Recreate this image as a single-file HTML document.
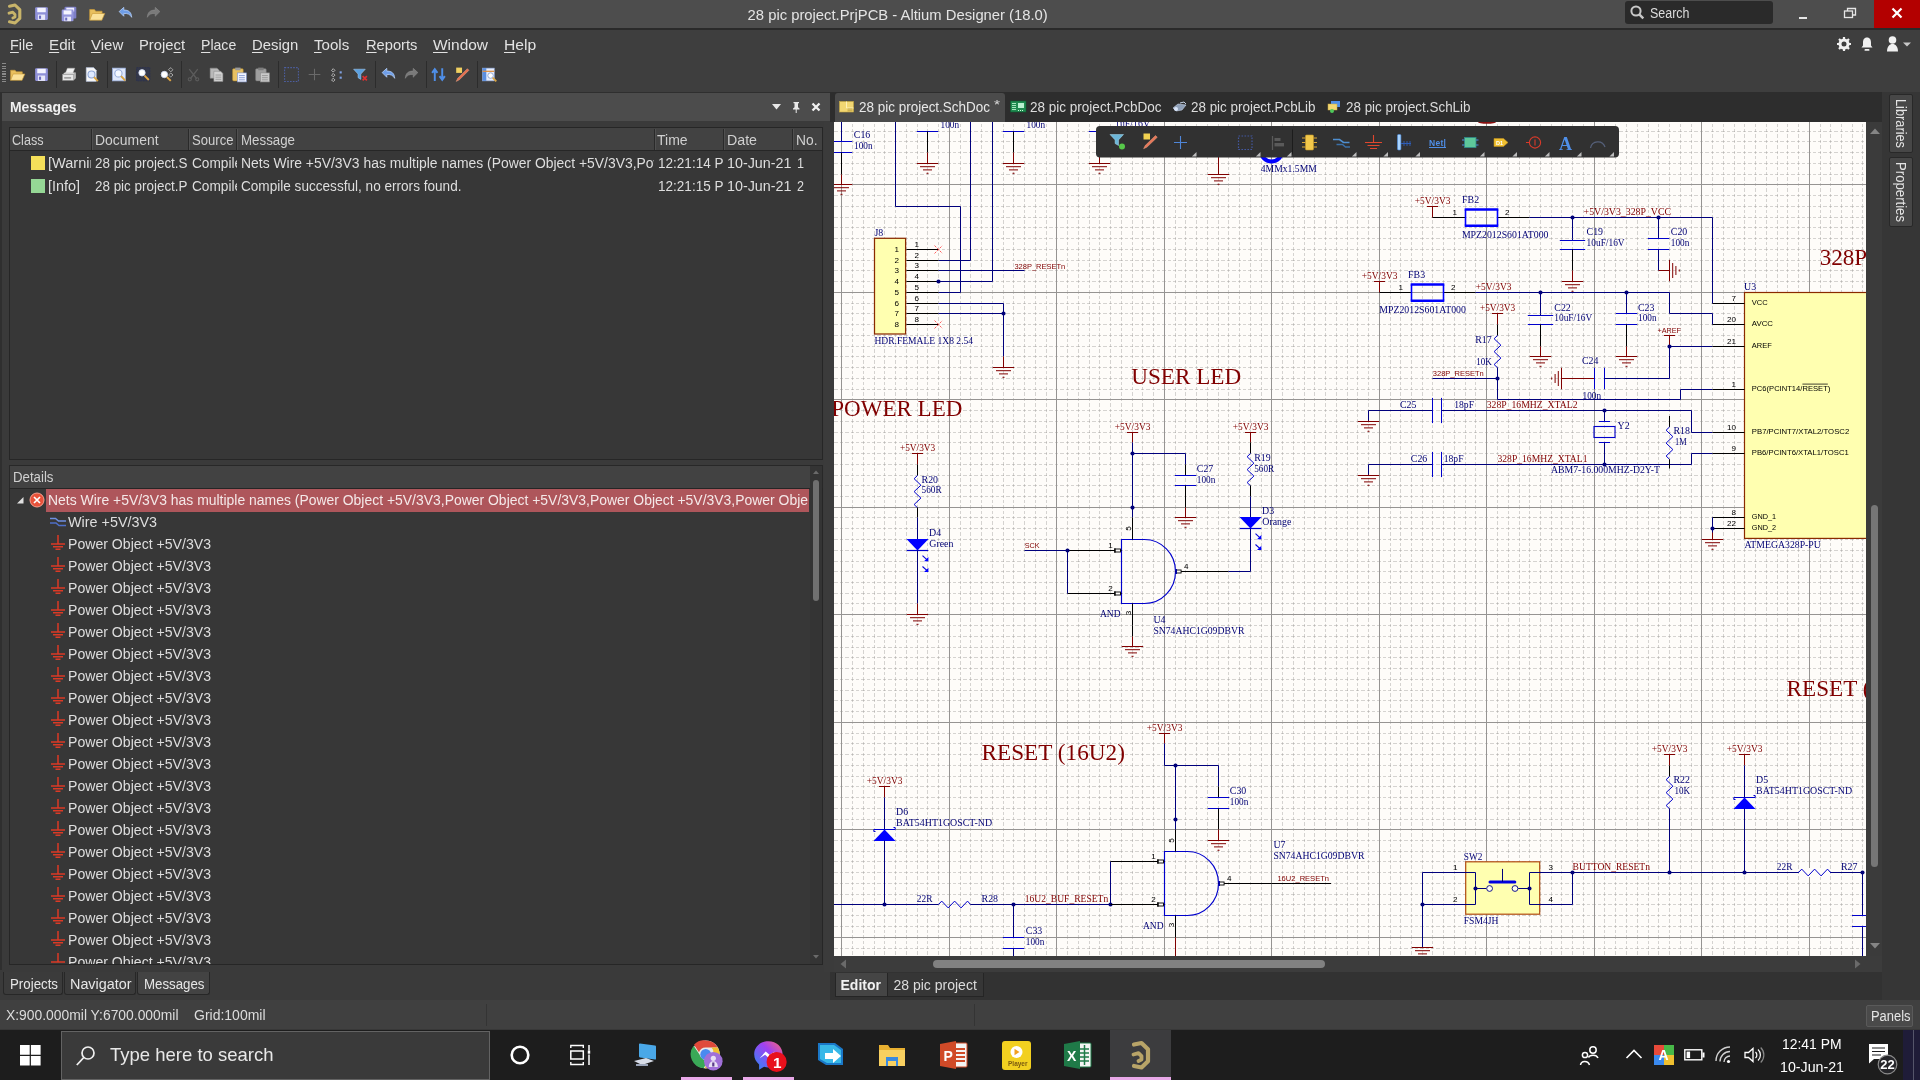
<!DOCTYPE html>
<html><head><meta charset="utf-8"><title>Altium Designer</title>
<style>
*{box-sizing:border-box;margin:0;padding:0}
html,body{width:1920px;height:1080px;overflow:hidden;background:#3e3e3e;font-family:"Liberation Sans",sans-serif;}
.a{position:absolute}
.t{position:absolute;white-space:nowrap;transform-origin:0 50%;line-height:1;color:#dcdcdc;font-size:14px}
.b{font-weight:bold}
svg{position:absolute;overflow:hidden}
svg text{white-space:pre}
.ts{font-family:"Liberation Serif",serif;font-size:9.9px;fill:#000074}
.tr{font-family:"Liberation Serif",serif;font-size:9.9px;fill:#800000}
.ta{font-family:"Liberation Sans",sans-serif;font-size:7.7px;fill:#800000}
.tp{font-family:"Liberation Sans",sans-serif;font-size:8.1px;fill:#000}
.tb{font-family:"Liberation Serif",serif;font-size:23px;fill:#800000}
u{text-decoration:underline;text-underline-offset:2px}
</style></head><body><div id="root" style="position:absolute;left:0;top:0;width:1920px;height:1080px;will-change:transform">
<div class="a" style="left:0px;top:0px;width:1920px;height:28px;background:#4d4d4d;"></div>
<div class="a" style="left:0px;top:28px;width:1920px;height:1.5px;background:#2a2a2a;"></div>
<div class="a" style="left:0px;top:29.5px;width:1920px;height:62.5px;background:#3e3e3e;"></div>
<svg style="left:3px;top:1px" width="22" height="26" viewBox="0 0 22 26"><path d="M6.500 5.200L12 4l4.800 4.600v8.800L12 22l-5.500-1.200" fill="none" stroke="#c8b46a" stroke-width="3.100" stroke-linejoin="round" stroke-linecap="round"/><path d="M6 12.200l3.800-1 2.200 2.200v2.600l-2.200 1" fill="none" stroke="#c8b46a" stroke-width="2.800" stroke-linejoin="round" stroke-linecap="round"/></svg>
<svg style="left:32.5px;top:5px" width="17" height="17" viewBox="0 0 16 16"><rect x="2" y="2" width="12" height="12" rx="1" fill="#8f90d8"/><rect x="4" y="2.6" width="8" height="4.2" fill="#f4f4ff"/><rect x="4.6" y="9" width="6.8" height="5" fill="#e8e8fa"/><rect x="5.6" y="10" width="2" height="3" fill="#6b6cc0"/></svg>
<svg style="left:60px;top:4.5px" width="18" height="18" viewBox="0 0 16 16"><rect x="4" y="1.5" width="10.5" height="10.5" rx="1" fill="#7d7ec6"/><rect x="5.6" y="2.4" width="7" height="3.4" fill="#eef"/><rect x="1.5" y="4" width="10.5" height="10.5" rx="1" fill="#9495dc"/><rect x="3.2" y="4.8" width="7" height="3.6" fill="#f4f4ff"/><rect x="3.8" y="10.4" width="6" height="4" fill="#e8e8fa"/><rect x="4.6" y="11.2" width="1.8" height="2.6" fill="#6b6cc0"/></svg>
<svg style="left:88px;top:5px" width="18" height="18" viewBox="0 0 16 16"><path d="M1.5 13.5V4h4.2l1.2 1.5h5.6v2" fill="#e9c05e" stroke="#c89a38" stroke-width=".6"/><path d="M1.5 13.5l2.4-6h11l-2.6 6z" fill="#fbe29a" stroke="#c89a38" stroke-width=".6"/></svg>
<svg style="left:116.5px;top:4.5px" width="17" height="17" viewBox="0 0 16 16"><path d="M2 6.2l4.4-4v2.6c4.4-.2 7.2 2 7.400 6.800-1.600-3-3.800-3.800-7.400-3.600v2.600z" fill="#6f9ee8" stroke="#b9d2fa" stroke-width=".7"/></svg>
<svg style="left:144.5px;top:4.5px" width="17" height="17" viewBox="0 0 16 16"><path d="M14 6.2l-4.4-4v2.600c-4.400-.200-7.200 2-7.400 6.800 1.600-3 3.800-3.800 7.400-3.600v2.600z" fill="#7a7a7a" stroke="#8d8d8d" stroke-width=".5"/></svg>
<span class="t" style="left:747.6px;top:8.05px;font-size:14.8px;color:#e4e4e4;">28 pic project.PrjPCB - Altium Designer (18.0)</span>
<div class="a" style="left:1625px;top:1px;width:148px;height:23px;background:#2a2a2a;border-radius:3px"></div>
<svg style="left:1629px;top:4px" width="16" height="16" viewBox="0 0 16 16"><circle cx="7" cy="7" r="4.600" fill="none" stroke="#c8c8c8" stroke-width="2"/><path d="M10.300 10.300l4 4" stroke="#c8c8c8" stroke-width="2.400"/></svg>
<span class="t" style="left:1650px;top:5.74px;color:#dcdcdc;transform:scaleX(0.8904);">Search</span>
<div class="a" style="left:1798.5px;top:17px;width:8px;height:2px;background:#e6e6e6;"></div>
<svg style="left:1843px;top:6px" width="14" height="14" viewBox="0 0 14 14"><rect x="1.500" y="5" width="8" height="6.500" fill="none" stroke="#e6e6e6" stroke-width="1.300"/><path d="M4.500 5v-2.500h8v6.500h-3" fill="none" stroke="#e6e6e6" stroke-width="1.300"/></svg>
<div class="a" style="left:1874px;top:0px;width:46px;height:28px;background:#b30000;"></div>
<svg style="left:1890px;top:6px" width="14" height="14" viewBox="0 0 14 14"><path d="M2.500 2.500l9 9M11.500 2.500l-9 9" stroke="#fff" stroke-width="2.200"/></svg>
<span class="t" style="left:10px;top:37.25px;font-size:15px;color:#e2e2e2;transform:scaleX(0.9598);"><u>F</u>ile</span>
<span class="t" style="left:49px;top:37.25px;font-size:15px;color:#e2e2e2;transform:scaleX(1.0136);"><u>E</u>dit</span>
<span class="t" style="left:91px;top:37.25px;font-size:15px;color:#e2e2e2;"><u>V</u>iew</span>
<span class="t" style="left:139px;top:37.25px;font-size:15px;color:#e2e2e2;transform:scaleX(0.9853);">Proje<u>c</u>t</span>
<span class="t" style="left:201px;top:37.25px;font-size:15px;color:#e2e2e2;transform:scaleX(0.9381);"><u>P</u>lace</span>
<span class="t" style="left:252px;top:37.25px;font-size:15px;color:#e2e2e2;transform:scaleX(0.9894);"><u>D</u>esign</span>
<span class="t" style="left:314px;top:37.25px;font-size:15px;color:#e2e2e2;transform:scaleX(1.0052);"><u>T</u>ools</span>
<span class="t" style="left:366px;top:37.25px;font-size:15px;color:#e2e2e2;transform:scaleX(0.9786);"><u>R</u>eports</span>
<span class="t" style="left:433px;top:37.25px;font-size:15px;color:#e2e2e2;transform:scaleX(1.0309);"><u>W</u>indow</span>
<span class="t" style="left:504px;top:37.25px;font-size:15px;color:#e2e2e2;transform:scaleX(1.0437);"><u>H</u>elp</span>
<svg style="left:1836px;top:36px" width="16" height="16" viewBox="0 0 16 16"><circle cx="8" cy="8" r="4" fill="none" stroke="#f0f0f0" stroke-width="3"/><path d="M8 1v14M1 8h14M3 3l10 10M13 3l-10 10" stroke="#f0f0f0" stroke-width="2.200" stroke-dasharray="2.200 9.600 2.200 0"/><circle cx="8" cy="8" r="1.900" fill="#3e3e3e"/></svg>
<svg style="left:1860px;top:36px" width="14" height="16" viewBox="0 0 14 16"><path d="M7 1.500c3 0 4 2.500 4 5v3l1.500 2h-11l1.500-2v-3c0-2.500 1-5 4-5z" fill="#f0f0f0"/><rect x="4.500" y="13" width="5" height="1.800" rx=".9" fill="#f0f0f0"/></svg>
<svg style="left:1884px;top:35px" width="28" height="18" viewBox="0 0 28 18"><circle cx="8.500" cy="5" r="3.800" fill="#f0f0f0"/><path d="M3 16.500c0-5 2.500-7.500 5.500-7.500s5.500 2.500 5.500 7.500z" fill="#f0f0f0"/><path d="M19 7.500h8l-4 4z" fill="#c8c8c8"/></svg>
<div class="a" style="left:2px;top:63px;width:4px;height:1.2px;background:#8a8a8a;"></div>
<div class="a" style="left:2px;top:65.6px;width:4px;height:1.2px;background:#8a8a8a;"></div>
<div class="a" style="left:2px;top:68.2px;width:4px;height:1.2px;background:#8a8a8a;"></div>
<div class="a" style="left:2px;top:70.8px;width:4px;height:1.2px;background:#8a8a8a;"></div>
<div class="a" style="left:2px;top:73.4px;width:4px;height:1.2px;background:#8a8a8a;"></div>
<div class="a" style="left:2px;top:76px;width:4px;height:1.2px;background:#8a8a8a;"></div>
<div class="a" style="left:2px;top:78.6px;width:4px;height:1.2px;background:#8a8a8a;"></div>
<div class="a" style="left:2px;top:81.2px;width:4px;height:1.2px;background:#8a8a8a;"></div>
<svg style="left:8.5px;top:66px" width="17" height="17" viewBox="0 0 16 16"><path d="M1.5 13.5V4h4.2l1.2 1.5h5.6v2" fill="#e9c05e" stroke="#c89a38" stroke-width=".6"/><path d="M1.5 13.5l2.4-6h11l-2.6 6z" fill="#fbe29a" stroke="#c89a38" stroke-width=".6"/></svg>
<svg style="left:32.5px;top:66px" width="17" height="17" viewBox="0 0 16 16"><rect x="2" y="2" width="12" height="12" rx="1" fill="#8f90d8"/><rect x="4" y="2.6" width="8" height="4.2" fill="#f4f4ff"/><rect x="4.6" y="9" width="6.8" height="5" fill="#e8e8fa"/><rect x="5.6" y="10" width="2" height="3" fill="#6b6cc0"/></svg>
<svg style="left:60.5px;top:66px" width="17" height="17" viewBox="0 0 16 16"><path d="M4 7l2-5h7l-2 5z" fill="#f2f2f2" stroke="#aaa" stroke-width=".4"/><path d="M1.500 8l2-2h10.500l-2 2z" fill="#d4d4d4"/><rect x="1.500" y="8" width="10.500" height="5.500" fill="#e6e6e6" stroke="#9a9a9a" stroke-width=".4"/><path d="M12 8l2-2v5.500l-2 2z" fill="#b8b8b8"/><rect x="3" y="10.600" width="6.500" height="1.200" fill="#888"/></svg>
<svg style="left:82.5px;top:66px" width="17" height="17" viewBox="0 0 16 16"><path d="M3 1.500h7l2.500 2.500v10.500h-9.500z" fill="#f7f7f7" stroke="#a8b8d8" stroke-width=".5"/><circle cx="8" cy="8" r="3.300" fill="#dfeaff" stroke="#8ea6d6" stroke-width="1"/><path d="M10.400 10.400l3.600 3.800" stroke="#d9a441" stroke-width="1.800"/></svg>
<svg style="left:110.5px;top:66px" width="17" height="17" viewBox="0 0 16 16"><rect x="1.500" y="2" width="12" height="12" fill="#dfe8fb" stroke="#9db2e0" stroke-width=".7"/><circle cx="7" cy="7" r="3.400" fill="#f4f8ff" stroke="#93a9d8" stroke-width="1"/><path d="M9.500 9.500l4 4.200" stroke="#d9a441" stroke-width="1.800"/></svg>
<svg style="left:134.5px;top:66px" width="17" height="17" viewBox="0 0 16 16"><rect x="1.500" y="1.500" width="12.500" height="12.500" fill="#34384a" stroke="#2a3050" stroke-width=".8" stroke-dasharray="1.500 1"/><circle cx="6.600" cy="6.400" r="3" fill="#fff" stroke="#cfd8ee" stroke-width=".8"/><path d="M9 9l4 4.200" stroke="#e0a646" stroke-width="1.800"/></svg>
<svg style="left:157.5px;top:66px" width="17" height="17" viewBox="0 0 16 16"><circle cx="6" cy="8" r="3" fill="#fff" stroke="#cfd8ee" stroke-width=".8"/><path d="M8.400 10.400l3.600 3.600" stroke="#e0a646" stroke-width="1.800"/><path d="M12 1.500l2 2-2 2-2-2z M12 6.500l2 2-2 2-2-2z" fill="none" stroke="#e8e8e8" stroke-width=".9" stroke-dasharray="1 .6"/></svg>
<svg style="left:184.5px;top:66px" width="17" height="17" viewBox="0 0 16 16"><path d="M4 3l7 9M12 3l-7 9" stroke="#5c5c5c" stroke-width="1.200"/><circle cx="4.500" cy="12.500" r="1.500" fill="none" stroke="#5c5c5c"/><circle cx="11.500" cy="12.500" r="1.500" fill="none" stroke="#5c5c5c"/></svg>
<svg style="left:207.5px;top:66px" width="17" height="17" viewBox="0 0 16 16"><path d="M2 2h6.500l2 2v7.500h-8.500z" fill="#b9b9b9" stroke="#8a8a8a" stroke-width=".5"/><path d="M5.500 5h6.500l2 2v7.500h-8.500z" fill="#d2d2d2" stroke="#8a8a8a" stroke-width=".5"/><path d="M7 8.500h5.500M7 10.500h5.500M7 12.500h5.500" stroke="#8c8c8c" stroke-width=".7"/></svg>
<svg style="left:230.5px;top:66px" width="17" height="17" viewBox="0 0 16 16"><rect x="1.500" y="2.500" width="10" height="11.500" rx="1" fill="#e8c163" stroke="#b88d2e" stroke-width=".5"/><rect x="4" y="1.500" width="5" height="2.500" fill="#9a9a9a"/><rect x="6" y="6.500" width="8.500" height="8.500" fill="#f2f5ff" stroke="#7f93c9" stroke-width=".6"/><path d="M7.500 9h5.500M7.500 11h5.500M7.500 13h5.500" stroke="#6f86c6" stroke-width=".7"/></svg>
<svg style="left:253.5px;top:66px" width="17" height="17" viewBox="0 0 16 16"><rect x="1.500" y="2.500" width="10" height="11.500" rx="1" fill="#9f9f9f" stroke="#777" stroke-width=".5"/><rect x="4" y="1.500" width="5" height="2.500" fill="#7d7d7d"/><rect x="6" y="6.500" width="8.500" height="8.500" fill="#c9c9c9" stroke="#8a8a8a" stroke-width=".6"/><path d="M7.500 9h5.500M7.500 11h5.500M7.500 13h5.500" stroke="#8a8a8a" stroke-width=".7"/></svg>
<svg style="left:282.5px;top:66px" width="17" height="17" viewBox="0 0 16 16"><rect x="1.500" y="1.500" width="13" height="13" fill="none" stroke="#4d5fa0" stroke-width="1" stroke-dasharray="1.500 1.200"/></svg>
<svg style="left:305.5px;top:66px" width="17" height="17" viewBox="0 0 16 16"><path d="M8 2.500v11M2.500 8h11" stroke="#6a6a6a" stroke-width="1"/></svg>
<svg style="left:328.5px;top:66px" width="17" height="17" viewBox="0 0 16 16"><path d="M4 2.500l1.600 1.600-1.600 1.600-1.600-1.600zM4 7l1.600 1.600-1.600 1.600-1.600-1.600zM4 11.500l1.600 1.600-1.600 1.600-1.600-1.600z" fill="none" stroke="#c8c8c8" stroke-width=".8"/><rect x="10" y="5" width="2" height="2" fill="#7fa0e0"/><rect x="10" y="10" width="2" height="2" fill="#7fa0e0"/></svg>
<svg style="left:351.5px;top:66px" width="17" height="17" viewBox="0 0 16 16"><path d="M1.500 3h11l-4.200 4.600v5l-2.600-1.600v-3.400z" fill="#5aa0e0" stroke="#a8d0f8" stroke-width=".5"/><path d="M10 9.500l4 4M14 9.500l-4 4" stroke="#e03030" stroke-width="1.600"/></svg>
<svg style="left:379.5px;top:66px" width="17" height="17" viewBox="0 0 16 16"><path d="M2 6.2l4.4-4v2.6c4.4-.2 7.2 2 7.400 6.800-1.600-3-3.800-3.800-7.400-3.600v2.600z" fill="#6f9ee8" stroke="#b9d2fa" stroke-width=".7"/></svg>
<svg style="left:402.5px;top:66px" width="17" height="17" viewBox="0 0 16 16"><path d="M14 6.2l-4.4-4v2.600c-4.400-.200-7.200 2-7.400 6.800 1.600-3 3.800-3.800 7.400-3.600v2.600z" fill="#7a7a7a" stroke="#8d8d8d" stroke-width=".5"/></svg>
<svg style="left:429.5px;top:66px" width="17" height="17" viewBox="0 0 16 16"><path d="M4.500 14V4M2 6.500l2.500-3.500 2.500 3.500" fill="none" stroke="#4f8fe8" stroke-width="1.800"/><path d="M11.500 2v10M9 9.500l2.500 3.500 2.500-3.500" fill="none" stroke="#4f8fe8" stroke-width="1.800"/></svg>
<svg style="left:452.5px;top:66px" width="17" height="17" viewBox="0 0 16 16"><rect x="3" y="1.500" width="5.500" height="5" fill="#f0d060"/><path d="M13.500 2.500l1.500 1.500-9 9-3 1.500 1.500-3z" fill="#e87050" stroke="#f4b090" stroke-width=".4"/></svg>
<svg style="left:480.5px;top:66px" width="17" height="17" viewBox="0 0 16 16"><rect x="1.500" y="2" width="11" height="12" fill="#e8eefc" stroke="#8ea6d6" stroke-width=".6"/><rect x="1.500" y="2" width="3.500" height="12" fill="#5b8fe0"/><path d="M1.500 5h11" stroke="#e09040" stroke-width="1.200"/><circle cx="9" cy="9" r="2.600" fill="#fff" stroke="#8ea6d6" stroke-width=".9"/><path d="M11 11l3.400 3.400" stroke="#d9a441" stroke-width="1.700"/></svg>
<div class="a" style="left:56px;top:61px;width:1px;height:27px;background:#2c2c2c;"></div>
<div class="a" style="left:107px;top:61px;width:1px;height:27px;background:#2c2c2c;"></div>
<div class="a" style="left:181px;top:61px;width:1px;height:27px;background:#2c2c2c;"></div>
<div class="a" style="left:278px;top:61px;width:1px;height:27px;background:#2c2c2c;"></div>
<div class="a" style="left:375px;top:61px;width:1px;height:27px;background:#2c2c2c;"></div>
<div class="a" style="left:426px;top:61px;width:1px;height:27px;background:#2c2c2c;"></div>
<div class="a" style="left:477px;top:61px;width:1px;height:27px;background:#2c2c2c;"></div>
<div class="a" style="left:0px;top:92px;width:834px;height:908px;background:#2f2f2f;"></div>
<div class="a" style="left:2px;top:93px;width:828px;height:28px;background:#4c4c4c;"></div>
<span class="t b" style="left:10px;top:99.45px;font-size:15px;color:#f0f0f0;transform:scaleX(0.9287);">Messages</span>
<svg style="left:770px;top:100px" width="56" height="14" viewBox="0 0 56 14"><path d="M2 4h9l-4.500 5.500z" fill="#e8e8e8"/><path d="M23.500 2h5.500v1.200h-1v4l1.500 1.300v1h-2.800v3.500h-1v-3.500h-2.700v-1l1.500-1.300v-4h-1z" fill="#e8e8e8"/><path d="M42.500 3.500l7 7M49.500 3.500l-7 7" stroke="#f0f0f0" stroke-width="2.300"/></svg>
<div class="a" style="left:2px;top:121px;width:828px;height:853px;background:#3a3a3a;"></div>
<div class="a" style="left:9px;top:127px;width:814px;height:332.5px;background:#373737;border:1px solid #262626"></div>
<div class="a" style="left:10px;top:128px;width:812px;height:23px;background:#424242;border-bottom:1px solid #262626"></div>
<div class="a" style="left:91px;top:129px;width:1px;height:21px;background:#2a2a2a;"></div>
<div class="a" style="left:92px;top:129px;width:1px;height:21px;background:#505050;"></div>
<div class="a" style="left:188px;top:129px;width:1px;height:21px;background:#2a2a2a;"></div>
<div class="a" style="left:189px;top:129px;width:1px;height:21px;background:#505050;"></div>
<div class="a" style="left:236px;top:129px;width:1px;height:21px;background:#2a2a2a;"></div>
<div class="a" style="left:237px;top:129px;width:1px;height:21px;background:#505050;"></div>
<div class="a" style="left:654px;top:129px;width:1px;height:21px;background:#2a2a2a;"></div>
<div class="a" style="left:655px;top:129px;width:1px;height:21px;background:#505050;"></div>
<div class="a" style="left:723px;top:129px;width:1px;height:21px;background:#2a2a2a;"></div>
<div class="a" style="left:724px;top:129px;width:1px;height:21px;background:#505050;"></div>
<div class="a" style="left:792px;top:129px;width:1px;height:21px;background:#2a2a2a;"></div>
<div class="a" style="left:793px;top:129px;width:1px;height:21px;background:#505050;"></div>
<span class="t" style="left:12px;top:133.14px;color:#d0d0d0;transform:scaleX(0.8998);">Class</span>
<span class="t" style="left:95px;top:133.14px;color:#d0d0d0;transform:scaleX(0.9952);">Document</span>
<span class="t" style="left:192px;top:133.14px;color:#d0d0d0;transform:scaleX(0.9355);">Source</span>
<span class="t" style="left:241px;top:133.14px;color:#d0d0d0;transform:scaleX(0.9506);">Message</span>
<span class="t" style="left:657px;top:133.14px;color:#d0d0d0;">Time</span>
<span class="t" style="left:727px;top:133.14px;color:#d0d0d0;transform:scaleX(1.0144);">Date</span>
<span class="t" style="left:796px;top:133.14px;color:#d0d0d0;transform:scaleX(0.9869);">No.</span>
<div class="a" style="left:31px;top:156.2px;width:13.5px;height:13.5px;background:#f5e05a;"></div>
<div class="a" style="left:48px;top:154.34px;width:42.5px;height:19px;overflow:hidden;"><span class="t" style="left:0;top:2px;color:#dedede;transform:scaleX(1.0393)">[Warning]</span></div>
<div class="a" style="left:95px;top:154.34px;width:92.5px;height:19px;overflow:hidden;"><span class="t" style="left:0;top:2px;color:#dedede;transform:scaleX(0.9586)">28 pic project.SchDoc</span></div>
<div class="a" style="left:192px;top:154.34px;width:44.8px;height:19px;overflow:hidden;"><span class="t" style="left:0;top:2px;color:#dedede;transform:scaleX(0.9755)">Compiler</span></div>
<div class="a" style="left:241px;top:154.34px;width:413px;height:19px;overflow:hidden;"><span class="t" style="left:0;top:2px;color:#dedede;transform:scaleX(0.9927)">Nets Wire +5V/3V3 has multiple names (Power Object +5V/3V3,Power Object +5V/3V3)</span></div>
<div class="a" style="left:658px;top:154.34px;width:65.5px;height:19px;overflow:hidden;"><span class="t" style="left:0;top:2px;color:#dedede;transform:scaleX(0.9671)">12:21:14 PM</span></div>
<span class="t" style="left:727px;top:156.34px;color:#dedede;transform:scaleX(1.0231);">10-Jun-21</span>
<span class="t" style="left:797px;top:156.34px;color:#dedede;transform:scaleX(0.8990);">1</span>
<div class="a" style="left:31px;top:179.2px;width:13.5px;height:13.5px;background:#95d795;"></div>
<div class="a" style="left:48px;top:177.34px;width:42.5px;height:19px;overflow:hidden;"><span class="t" style="left:0;top:2px;color:#dedede;transform:scaleX(1.0279)">[Info]</span></div>
<div class="a" style="left:95px;top:177.34px;width:92.5px;height:19px;overflow:hidden;"><span class="t" style="left:0;top:2px;color:#dedede;transform:scaleX(0.9586)">28 pic project.PrjPCB</span></div>
<div class="a" style="left:192px;top:177.34px;width:44.8px;height:19px;overflow:hidden;"><span class="t" style="left:0;top:2px;color:#dedede;transform:scaleX(0.9755)">Compiler</span></div>
<div class="a" style="left:241px;top:177.34px;width:413px;height:19px;overflow:hidden;"><span class="t" style="left:0;top:2px;color:#dedede;transform:scaleX(0.9704)">Compile successful, no errors found.</span></div>
<div class="a" style="left:658px;top:177.34px;width:65.5px;height:19px;overflow:hidden;"><span class="t" style="left:0;top:2px;color:#dedede;transform:scaleX(0.9671)">12:21:15 PM</span></div>
<span class="t" style="left:727px;top:179.34px;color:#dedede;transform:scaleX(1.0231);">10-Jun-21</span>
<span class="t" style="left:797px;top:179.34px;color:#dedede;transform:scaleX(0.8990);">2</span>
<div class="a" style="left:9px;top:464.5px;width:814px;height:24px;background:#424242;border:1px solid #282828"></div>
<span class="t" style="left:13px;top:470.34px;color:#d0d0d0;transform:scaleX(0.9464);">Details</span>
<div class="a" style="left:9px;top:488px;width:814px;height:477px;background:#373737;border:1px solid #262626"></div>
<div class="a" style="left:10px;top:489px;width:812px;height:475px;overflow:hidden">
<div class="a" style="left:36px;top:0px;width:763px;height:22.500px;background:#ae565b"></div>
<svg style="left:4px;top:5px" width="12" height="12"><path d="M9.500 3v6.500h-6.500z" fill="#e0e0e0"/></svg>
<svg style="left:19px;top:3px" width="16" height="16"><circle cx="8" cy="8" r="7" fill="#e8523a" stroke="#f6a090" stroke-width="1"/><path d="M5 5l6 6M11 5l-6 6" stroke="#fff" stroke-width="1.700"/></svg>
<span class="t" style="left:38px;top:4.34px;color:#f4e8e8;transform:scaleX(0.9956)">Nets Wire +5V/3V3 has multiple names (Power Object +5V/3V3,Power Object +5V/3V3,Power Object +5V/3V3,Power Obje</span>
<svg style="left:39px;top:26px" width="18" height="14"><path d="M1 3.500h5.500l3 2.500h7.500" fill="none" stroke="#6f8fe0" stroke-width="1.500"/><path d="M1 8h6l3 2.500h7" fill="none" stroke="#4f6fc8" stroke-width="1.500"/></svg>
<span class="t" style="left:58px;top:26.34px;color:#dedede;transform:scaleX(1.0258)">Wire +5V/3V3</span>
<svg style="left:40px;top:45.7px" width="16" height="16"><path d="M8 0v9M1 9h14M3 11.700h10M5.500 14.200h5" stroke="#dc3a26" stroke-width="1.500"/></svg>
<span class="t" style="left:58px;top:48.34px;color:#dedede;transform:scaleX(1.0069)">Power Object +5V/3V3</span>
<svg style="left:40px;top:67.7px" width="16" height="16"><path d="M8 0v9M1 9h14M3 11.700h10M5.500 14.200h5" stroke="#dc3a26" stroke-width="1.500"/></svg>
<span class="t" style="left:58px;top:70.34px;color:#dedede;transform:scaleX(1.0069)">Power Object +5V/3V3</span>
<svg style="left:40px;top:89.7px" width="16" height="16"><path d="M8 0v9M1 9h14M3 11.700h10M5.500 14.200h5" stroke="#dc3a26" stroke-width="1.500"/></svg>
<span class="t" style="left:58px;top:92.34px;color:#dedede;transform:scaleX(1.0069)">Power Object +5V/3V3</span>
<svg style="left:40px;top:111.7px" width="16" height="16"><path d="M8 0v9M1 9h14M3 11.700h10M5.500 14.200h5" stroke="#dc3a26" stroke-width="1.500"/></svg>
<span class="t" style="left:58px;top:114.34px;color:#dedede;transform:scaleX(1.0069)">Power Object +5V/3V3</span>
<svg style="left:40px;top:133.7px" width="16" height="16"><path d="M8 0v9M1 9h14M3 11.700h10M5.500 14.200h5" stroke="#dc3a26" stroke-width="1.500"/></svg>
<span class="t" style="left:58px;top:136.34px;color:#dedede;transform:scaleX(1.0069)">Power Object +5V/3V3</span>
<svg style="left:40px;top:155.7px" width="16" height="16"><path d="M8 0v9M1 9h14M3 11.700h10M5.500 14.200h5" stroke="#dc3a26" stroke-width="1.500"/></svg>
<span class="t" style="left:58px;top:158.34px;color:#dedede;transform:scaleX(1.0069)">Power Object +5V/3V3</span>
<svg style="left:40px;top:177.7px" width="16" height="16"><path d="M8 0v9M1 9h14M3 11.700h10M5.500 14.200h5" stroke="#dc3a26" stroke-width="1.500"/></svg>
<span class="t" style="left:58px;top:180.34px;color:#dedede;transform:scaleX(1.0069)">Power Object +5V/3V3</span>
<svg style="left:40px;top:199.7px" width="16" height="16"><path d="M8 0v9M1 9h14M3 11.700h10M5.500 14.200h5" stroke="#dc3a26" stroke-width="1.500"/></svg>
<span class="t" style="left:58px;top:202.34px;color:#dedede;transform:scaleX(1.0069)">Power Object +5V/3V3</span>
<svg style="left:40px;top:221.7px" width="16" height="16"><path d="M8 0v9M1 9h14M3 11.700h10M5.500 14.200h5" stroke="#dc3a26" stroke-width="1.500"/></svg>
<span class="t" style="left:58px;top:224.34px;color:#dedede;transform:scaleX(1.0069)">Power Object +5V/3V3</span>
<svg style="left:40px;top:243.7px" width="16" height="16"><path d="M8 0v9M1 9h14M3 11.700h10M5.500 14.200h5" stroke="#dc3a26" stroke-width="1.500"/></svg>
<span class="t" style="left:58px;top:246.34px;color:#dedede;transform:scaleX(1.0069)">Power Object +5V/3V3</span>
<svg style="left:40px;top:265.7px" width="16" height="16"><path d="M8 0v9M1 9h14M3 11.700h10M5.500 14.200h5" stroke="#dc3a26" stroke-width="1.500"/></svg>
<span class="t" style="left:58px;top:268.34px;color:#dedede;transform:scaleX(1.0069)">Power Object +5V/3V3</span>
<svg style="left:40px;top:287.7px" width="16" height="16"><path d="M8 0v9M1 9h14M3 11.700h10M5.500 14.200h5" stroke="#dc3a26" stroke-width="1.500"/></svg>
<span class="t" style="left:58px;top:290.34px;color:#dedede;transform:scaleX(1.0069)">Power Object +5V/3V3</span>
<svg style="left:40px;top:309.7px" width="16" height="16"><path d="M8 0v9M1 9h14M3 11.700h10M5.500 14.200h5" stroke="#dc3a26" stroke-width="1.500"/></svg>
<span class="t" style="left:58px;top:312.34px;color:#dedede;transform:scaleX(1.0069)">Power Object +5V/3V3</span>
<svg style="left:40px;top:331.7px" width="16" height="16"><path d="M8 0v9M1 9h14M3 11.700h10M5.500 14.200h5" stroke="#dc3a26" stroke-width="1.500"/></svg>
<span class="t" style="left:58px;top:334.34px;color:#dedede;transform:scaleX(1.0069)">Power Object +5V/3V3</span>
<svg style="left:40px;top:353.7px" width="16" height="16"><path d="M8 0v9M1 9h14M3 11.700h10M5.500 14.200h5" stroke="#dc3a26" stroke-width="1.500"/></svg>
<span class="t" style="left:58px;top:356.34px;color:#dedede;transform:scaleX(1.0069)">Power Object +5V/3V3</span>
<svg style="left:40px;top:375.7px" width="16" height="16"><path d="M8 0v9M1 9h14M3 11.700h10M5.500 14.200h5" stroke="#dc3a26" stroke-width="1.500"/></svg>
<span class="t" style="left:58px;top:378.34px;color:#dedede;transform:scaleX(1.0069)">Power Object +5V/3V3</span>
<svg style="left:40px;top:397.7px" width="16" height="16"><path d="M8 0v9M1 9h14M3 11.700h10M5.500 14.200h5" stroke="#dc3a26" stroke-width="1.500"/></svg>
<span class="t" style="left:58px;top:400.34px;color:#dedede;transform:scaleX(1.0069)">Power Object +5V/3V3</span>
<svg style="left:40px;top:419.7px" width="16" height="16"><path d="M8 0v9M1 9h14M3 11.700h10M5.500 14.200h5" stroke="#dc3a26" stroke-width="1.500"/></svg>
<span class="t" style="left:58px;top:422.34px;color:#dedede;transform:scaleX(1.0069)">Power Object +5V/3V3</span>
<svg style="left:40px;top:441.7px" width="16" height="16"><path d="M8 0v9M1 9h14M3 11.700h10M5.500 14.200h5" stroke="#dc3a26" stroke-width="1.500"/></svg>
<span class="t" style="left:58px;top:444.34px;color:#dedede;transform:scaleX(1.0069)">Power Object +5V/3V3</span>
<svg style="left:40px;top:463.7px" width="16" height="16"><path d="M8 0v9M1 9h14M3 11.700h10M5.500 14.200h5" stroke="#dc3a26" stroke-width="1.500"/></svg>
<span class="t" style="left:58px;top:466.34px;color:#dedede;transform:scaleX(1.0069)">Power Object +5V/3V3</span>
</div>
<div class="a" style="left:810px;top:465.5px;width:12px;height:498.5px;background:#343434;"></div>
<svg style="left:811px;top:468px" width="10" height="8" viewBox="0 0 10 8"><path d="M2 6l3-3.500 3 3.500z" fill="#6a6a6a"/></svg>
<svg style="left:811px;top:953px" width="10" height="8" viewBox="0 0 10 8"><path d="M2 2l3 3.500 3-3.500z" fill="#6a6a6a"/></svg>
<div class="a" style="left:812.5px;top:479.5px;width:6.5px;height:121px;background:#707070;border-radius:3px"></div>
<div class="a" style="left:0px;top:970px;width:834px;height:30px;background:#3a3a3a;"></div>
<div class="a" style="left:3px;top:971.5px;width:60px;height:23.5px;background:#3b3b3b;border:1px solid #272727;border-top:none;border-radius:0 0 3px 3px"></div>
<span class="t" style="left:10px;top:977.44px;color:#e6e6e6;transform:scaleX(0.9491);">Projects</span>
<div class="a" style="left:64px;top:971.5px;width:72px;height:23.5px;background:#3b3b3b;border:1px solid #272727;border-top:none;border-radius:0 0 3px 3px"></div>
<span class="t" style="left:70px;top:977.44px;color:#e6e6e6;transform:scaleX(1.0264);">Navigator</span>
<div class="a" style="left:137px;top:971.5px;width:73px;height:23.5px;background:#434343;border:1px solid #272727;border-top:none;border-radius:0 0 3px 3px"></div>
<span class="t" style="left:144px;top:977.44px;color:#e6e6e6;transform:scaleX(0.9482);">Messages</span>
<div class="a" style="left:830px;top:92px;width:1090px;height:908px;background:#2d2d2d;"></div>
<div class="a" style="left:824px;top:122px;width:10px;height:850px;background:#3b3b3b;"></div>
<div class="a" style="left:835px;top:93px;width:169.5px;height:29px;background:#4b4b4b;border-radius:3px 3px 0 0"></div>
<svg style="left:839px;top:100.5px" width="15" height="12" viewBox="0 0 15 12"><rect x=".500" y=".500" width="14" height="10.500" fill="#f2d772" stroke="#c8a840" stroke-width=".6"/><path d="M7.500 .5v6.500h7" fill="none" stroke="#fff2b8" stroke-width="1"/><path d="M8.500 8h5M8.500 9.800h5" stroke="#a88a30" stroke-width=".7"/></svg>
<span class="t" style="left:859.2px;top:100.3px;font-size:14.5px;color:#e8e8e8;transform:scaleX(0.9288);">28 pic project.SchDoc</span>
<span class="t" style="left:993.5px;top:98.13px;font-size:13px;color:#d8d8d8;transform:scaleX(1.1860);">*</span>
<svg style="left:1010px;top:100px" width="17" height="13" viewBox="0 0 17 13"><rect x=".500" y="1" width="15.500" height="11" fill="#1f8a50" stroke="#0f5a30" stroke-width=".6"/><rect x="8" y="3" width="6" height="5" fill="#b8f0d0"/><path d="M2 3.500h4M2 5.500h4M2 7.500h4M2 9.500h4" stroke="#c8ffd8" stroke-width=".8"/><path d="M8 10.500h6" stroke="#c8ffd8" stroke-width="1" stroke-dasharray="1 1"/></svg>
<span class="t" style="left:1030.3px;top:100.3px;font-size:14.5px;color:#dcdcdc;transform:scaleX(0.9323);">28 pic project.PcbDoc</span>
<svg style="left:1171px;top:100px" width="17" height="13" viewBox="0 0 17 13"><path d="M2 8l5-4 8 1-4 5-6 1z" fill="#8fa0b8" stroke="#c8d4e8" stroke-width=".6"/><circle cx="5" cy="9" r="2" fill="#d8e4f8"/><path d="M9 3l4-1 2 2" fill="none" stroke="#c8d4e8" stroke-width="1"/></svg>
<span class="t" style="left:1191px;top:100.3px;font-size:14.5px;color:#dcdcdc;transform:scaleX(0.9249);">28 pic project.PcbLib</span>
<svg style="left:1326px;top:99.5px" width="17" height="14" viewBox="0 0 17 14"><rect x="5" y="1" width="9" height="6" fill="#4f8fe8"/><rect x="2" y="4" width="9" height="6" fill="#f2d772" stroke="#c8a840" stroke-width=".5"/><circle cx="6" cy="11" r="2" fill="#4fc85a"/></svg>
<span class="t" style="left:1346px;top:100.3px;font-size:14.5px;color:#dcdcdc;transform:scaleX(0.9249);">28 pic project.SchLib</span>
<div class="a" style="left:830px;top:972px;width:1052px;height:28px;background:#323232;"></div>
<div class="a" style="left:1866px;top:122px;width:16px;height:834px;background:#3b3b3b;"></div>
<svg style="left:1868px;top:126px" width="14" height="10" viewBox="0 0 14 10"><path d="M2 8l5-5.500 5 5.500z" fill="#858585"/></svg>
<svg style="left:1868px;top:941px" width="14" height="10" viewBox="0 0 14 10"><path d="M2 2l5 5.500 5-5.500z" fill="#858585"/></svg>
<div class="a" style="left:1870.5px;top:505px;width:7.5px;height:362px;background:#767676;border-radius:4px"></div>
<div class="a" style="left:834px;top:956px;width:1048px;height:16px;background:#3c3c3c;"></div>
<svg style="left:838px;top:958px" width="10" height="12" viewBox="0 0 10 12"><path d="M8 1.500l-5.500 4.500 5.500 4.500z" fill="#6a6a6a"/></svg>
<svg style="left:1853px;top:958px" width="10" height="12" viewBox="0 0 10 12"><path d="M2 1.500l5.500 4.500-5.500 4.500z" fill="#6a6a6a"/></svg>
<div class="a" style="left:933px;top:960px;width:392px;height:8px;background:#818181;border-radius:4px"></div>
<div class="a" style="left:835px;top:973px;width:53px;height:24px;background:#454545;border:1px solid #252525;border-top:none"></div>
<span class="t b" style="left:840.5px;top:978.14px;color:#f2f2f2;">Editor</span>
<div class="a" style="left:888px;top:973px;width:96px;height:24px;background:#363636;border:1px solid #252525;border-top:none;border-left:none"></div>
<span class="t" style="left:893.5px;top:978.14px;color:#dcdcdc;">28 pic project</span>
<div class="a" style="left:1882px;top:92px;width:38px;height:908px;background:#363636;"></div>
<div class="a" style="left:1889px;top:94px;width:24px;height:59px;background:#474747;border:1px solid #282828;border-radius:2px"></div>
<span class="t" style="left:1901px;top:99px;color:#e4e4e4;transform-origin:0 0;transform:translate(7.4px,0) rotate(90deg) scaleX(0.9126)">Libraries</span>
<div class="a" style="left:1889px;top:157px;width:24px;height:70px;background:#474747;border:1px solid #282828;border-radius:2px"></div>
<span class="t" style="left:1901px;top:162px;color:#e4e4e4;transform-origin:0 0;transform:translate(7.4px,0) rotate(90deg) scaleX(0.9403)">Properties</span>
<div class="a" style="left:0px;top:1000px;width:1920px;height:30px;background:#404040;border-bottom:1.5px solid #383838"></div>
<span class="t" style="left:6px;top:1008.34px;color:#dcdcdc;transform:scaleX(0.9909);">X:900.000mil Y:6700.000mil</span>
<span class="t" style="left:194px;top:1008.34px;color:#dcdcdc;">Grid:100mil</span>
<div class="a" style="left:486px;top:1004px;width:1px;height:22px;background:#343434;"></div>
<div class="a" style="left:974px;top:1004px;width:1px;height:22px;background:#343434;"></div>
<div class="a" style="left:1866px;top:1005px;width:47px;height:22px;background:#4a4a4a;border:1px solid #5a5a5a;border-radius:2px"></div>
<span class="t" style="left:1871px;top:1009.14px;color:#e6e6e6;transform:scaleX(0.9227);">Panels</span>
<div class="a" style="left:0px;top:1030px;width:1920px;height:50px;background:#1d1d1d;"></div>
<svg style="left:19.5px;top:1045px" width="21" height="21" viewBox="0 0 21 21"><path d="M0 0h9.700v9.700h-9.700zM10.900 0h9.700v9.700h-9.700zM0 10.900h9.700v9.700h-9.700zM10.900 10.900h9.700v9.700h-9.700z" fill="#fff"/></svg>
<div class="a" style="left:60.5px;top:1030.5px;width:429px;height:49.5px;background:#3a3a3a;border:1px solid #636363"></div>
<svg style="left:75px;top:1045px" width="22" height="22" viewBox="0 0 22 22"><circle cx="13" cy="8" r="6" fill="none" stroke="#f0f0f0" stroke-width="1.700"/><path d="M8.800 12.500l-7 7.500" stroke="#f0f0f0" stroke-width="1.800"/></svg>
<span class="t" style="left:110px;top:1045.93px;font-size:18.5px;color:#e8e8e8;">Type here to search</span>
<svg style="left:508px;top:1043px" width="24" height="24" viewBox="0 0 24 24"><circle cx="12" cy="12" r="8.300" fill="none" stroke="#fff" stroke-width="2.600"/></svg>
<svg style="left:568px;top:1043px" width="26" height="24" viewBox="0 0 26 24"><rect x="2.800" y="8" width="12.500" height="8" fill="none" stroke="#fff" stroke-width="1.500"/><path d="M2.800 5v-2.500h12.500v2.500M2.800 19v2.500h12.500v-2.500" fill="none" stroke="#fff" stroke-width="1.400"/><path d="M21 2v5.500M21 11.500v10.500" stroke="#fff" stroke-width="1.500"/><rect x="19.800" y="7.500" width="2.400" height="3.200" fill="#fff"/></svg>
<svg style="left:630px;top:1040px" width="30" height="30" viewBox="0 0 30 30"><rect x="9" y="2" width="17" height="14" rx="1" fill="#4aa8e8" transform="skewY(8)" /><path d="M4 21l12-3 8 3-12 4z" fill="#d8dde8"/><rect x="6" y="24" width="12" height="2" fill="#9aa4b8"/></svg>
<svg style="left:690px;top:1038px" width="36" height="36" viewBox="0 0 36 36"><circle cx="15.700" cy="16.400" r="14" fill="#e8e8e8"/><path d="M15.700 2.400a14 14 0 0 1 12.100 7h-12.100a7 7 0 0 0-6.700 4.900l-5-7.600a14 14 0 0 1 11.700-4.300z" fill="#e04a3a"/><path d="M3.600 7.800a14 14 0 0 0 10 22.500l5-8.600a7 7 0 0 1-9.100-5.200z" fill="#3aa857"/><path d="M27.800 9.400a14 14 0 0 1-13.200 20.900l6-10.300a7 7 0 0 0 .9-10.600z" fill="#f0c030"/><circle cx="15.700" cy="16.400" r="5.400" fill="#4a8af0"/><circle cx="23.300" cy="23.200" r="9.300" fill="#a070d8"/><circle cx="23.300" cy="20.300" r="2.600" fill="#e8e0f4"/><path d="M18.800 29c0-4 2-5.800 4.500-5.800s4.500 1.800 4.500 5.800z" fill="#e8e0f4"/><rect x="22.200" y="24.500" width="2.200" height="4" fill="#5a3a8a"/></svg>
<svg style="left:751.5px;top:1038.5px" width="35" height="35" viewBox="0 0 32 32"><defs><linearGradient id="mg" x1="0" y1="1" x2="1" y2="0"><stop offset="0" stop-color="#2a8af8"/><stop offset=".6" stop-color="#a040f0"/><stop offset="1" stop-color="#ff6a70"/></linearGradient></defs><path d="M15 2c7.500 0 13 5.300 13 12s-5.500 12-13 12c-1.500 0-2.800-.2-4-.6l-4.500 2.600v-4.800c-2.800-2.200-4.500-5.400-4.500-9.200 0-6.700 5.500-12 13-12z" fill="url(#mg)"/><path d="M7 17.500l5.500-6 3.500 3 5-3-5.500 6-3.500-3z" fill="#fff"/><circle cx="22.500" cy="21" r="9.200" fill="#e8101c"/><text x="19.300" y="26.300" style="font:bold 14px 'Liberation Sans',sans-serif" fill="#fff">1</text></svg>
<svg style="left:816px;top:1041px" width="30" height="30" viewBox="0 0 30 30"><path d="M2 2h17l8 6v16h-17l-8-5z" fill="#1a78c8"/><path d="M4 4h14l7 5v13h-14l-7-4z" fill="#38b8e8"/><path d="M9 12h8v-4l8 7-8 7v-4h-8z" fill="#fff"/></svg>
<svg style="left:877px;top:1041px" width="30" height="28" viewBox="0 0 30 28"><path d="M2 4h9l2 3h15v18h-26z" fill="#e8b030"/><path d="M2 9h26v16h-26z" fill="#f8d060"/><rect x="9" y="16" width="12" height="9" fill="#3a8ae0"/><rect x="11" y="20" width="8" height="5" fill="#f8d060"/></svg>
<svg style="left:939px;top:1040px" width="30" height="30" viewBox="0 0 30 30"><rect x="12" y="3" width="16" height="24" rx="1" fill="#f4f4f4" stroke="#d04a28" stroke-width="1"/><path d="M17 9h9M17 13h9M17 17h9M17 21h9" stroke="#d04a28" stroke-width="2"/><path d="M1 4l16-3v28l-16-3z" fill="#d04a28"/><text x="4.500" y="20.500" style="font:bold 14px 'Liberation Sans',sans-serif" fill="#fff">P</text></svg>
<svg style="left:1002px;top:1041px" width="29" height="29" viewBox="0 0 29 29"><rect x="0" y="0" width="29" height="29" rx="3" fill="#f2d020"/><circle cx="14.500" cy="11" r="6" fill="#fff"/><path d="M12.500 7.800v6.400l5-3.200z" fill="#f2a020"/><text x="6" y="25" style="font:bold 6.500px 'Liberation Sans',sans-serif" fill="#7a5a10">Player</text></svg>
<svg style="left:1063px;top:1040px" width="30" height="30" viewBox="0 0 30 30"><rect x="12" y="3" width="16" height="24" rx="1" fill="#f4f4f4" stroke="#1f7a48" stroke-width="1"/><path d="M17 9h9M17 13h9M17 17h9M17 21h9M21.500 5v20" stroke="#1f7a48" stroke-width="1.500"/><path d="M1 4l16-3v28l-16-3z" fill="#1f7a48"/><text x="4" y="20.500" style="font:bold 14px 'Liberation Sans',sans-serif" fill="#fff">X</text></svg>
<div class="a" style="left:1110px;top:1030px;width:61px;height:50px;background:#3c3c3e;"></div>
<svg style="left:1125px;top:1038px" width="32" height="36" viewBox="0 0 32 36"><path d="M9 6.500L16.500 5l6.500 6.200v12L16.500 29.500 9 28" fill="none" stroke="#b8a468" stroke-width="4.200" stroke-linejoin="round" stroke-linecap="round"/><path d="M8.500 16.500l5-1.300 3 3v3.400l-3 1.400" fill="none" stroke="#b8a468" stroke-width="3.800" stroke-linejoin="round" stroke-linecap="round"/></svg>
<div class="a" style="left:681px;top:1077px;width:51px;height:3px;background:#e8a8e8;"></div>
<div class="a" style="left:743px;top:1077px;width:51px;height:3px;background:#e8a8e8;"></div>
<div class="a" style="left:1110px;top:1077px;width:61px;height:3px;background:#e8a8e8;"></div>
<svg style="left:1578px;top:1044px" width="24" height="24" viewBox="0 0 24 24"><circle cx="15" cy="6" r="3.200" fill="none" stroke="#fff" stroke-width="1.500"/><circle cx="7" cy="11" r="2.600" fill="none" stroke="#fff" stroke-width="1.500"/><path d="M10.500 13.500c1-3 8-3.500 9.500.5M2.500 21c.5-4.500 7.500-5 9 0" fill="none" stroke="#fff" stroke-width="1.500"/></svg>
<svg style="left:1625px;top:1048px" width="18" height="12" viewBox="0 0 18 12"><path d="M1.500 10l7.500-7.500 7.500 7.500" fill="none" stroke="#fff" stroke-width="1.600"/></svg>
<svg style="left:1654px;top:1045px" width="20" height="20" viewBox="0 0 20 20"><rect x="0" y="0" width="10" height="10" fill="#e84a3a"/><rect x="10" y="0" width="10" height="10" fill="#48b848"/><rect x="0" y="10" width="10" height="10" fill="#3a8af0"/><rect x="10" y="10" width="10" height="10" fill="#f0c030"/><text x="4.500" y="15" style="font:bold 14px 'Liberation Sans',sans-serif" fill="#fff">A</text></svg>
<svg style="left:1684px;top:1049px" width="22" height="12" viewBox="0 0 22 12"><rect x=".800" y=".800" width="17" height="10" fill="none" stroke="#fff" stroke-width="1.400"/><rect x="18.500" y="3.500" width="2" height="5" fill="#fff"/><rect x="2.600" y="2.600" width="3.500" height="6.500" fill="#fff"/></svg>
<svg style="left:1714px;top:1045px" width="22" height="20" viewBox="0 0 22 20"><path d="M2 16a14 14 0 0 1 14-14M6 16.500a10 10 0 0 1 10-10M10 17a6 6 0 0 1 6-6" fill="none" stroke="#d0d0d0" stroke-width="1.400"/><circle cx="14.500" cy="16.500" r="1.600" fill="#fff"/></svg>
<svg style="left:1743px;top:1045px" width="22" height="20" viewBox="0 0 22 20"><path d="M2 7.500h3.500l4.500-4v13l-4.500-4h-3.500z" fill="none" stroke="#fff" stroke-width="1.300"/><path d="M12.500 7a4 4 0 0 1 0 6M15 4.500a7.500 7.500 0 0 1 0 11" fill="none" stroke="#fff" stroke-width="1.200"/><path d="M17.700 2.500a10.500 10.500 0 0 1 0 15" fill="none" stroke="#888" stroke-width="1.200"/></svg>
<span class="t" style="left:1781.5px;top:1036px;font-size:15.5px;color:#fff;transform:scaleX(0.8968);">12:41 PM</span>
<span class="t" style="left:1779.5px;top:1059.4px;font-size:15.5px;color:#fff;transform:scaleX(0.9169);">10-Jun-21</span>
<svg style="left:1867px;top:1043px" width="32" height="34" viewBox="0 0 32 34"><path d="M2 1h19v15h-14l-5 4.500z" fill="#fff"/><path d="M5 5h13M5 8.500h13M5 12h9" stroke="#1d1d1f" stroke-width="1.200"/><circle cx="20.500" cy="21.500" r="9.3" fill="#26262a" stroke="#8a8a8a" stroke-width="1.200"/><text x="13.300" y="26.300" style="font:bold 13px 'Liberation Sans',sans-serif" fill="#fff">22</text></svg>
<div class="a" style="left:1903px;top:1030px;width:17px;height:50px;background:#1f1c38;"></div>
<div class="a" style="left:1913px;top:1030px;width:1px;height:50px;background:#55556a;"></div><svg class="a" style="left:834px;top:122px" width="1032" height="834" viewBox="834 122 1032 834" shape-rendering="auto">
<rect x="834" y="122" width="1032" height="834" fill="#fefcf9"/>
<g stroke="#8a8683" stroke-opacity="0.35" stroke-width="1" stroke-dasharray="3.4 1.975" shape-rendering="crispEdges">
<g stroke-dashoffset="3.7">
<path d="M831.5 122V956"/>
<path d="M852.5 122V956"/>
<path d="M863.5 122V956"/>
<path d="M874.5 122V956"/>
<path d="M884.5 122V956"/>
<path d="M895.5 122V956"/>
<path d="M906.5 122V956"/>
<path d="M917.5 122V956"/>
<path d="M927.5 122V956"/>
<path d="M938.5 122V956"/>
<path d="M960.5 122V956"/>
<path d="M970.5 122V956"/>
<path d="M981.5 122V956"/>
<path d="M992.5 122V956"/>
<path d="M1003.5 122V956"/>
<path d="M1013.5 122V956"/>
<path d="M1024.5 122V956"/>
<path d="M1035.5 122V956"/>
<path d="M1046.5 122V956"/>
<path d="M1067.5 122V956"/>
<path d="M1078.5 122V956"/>
<path d="M1089.5 122V956"/>
<path d="M1099.5 122V956"/>
<path d="M1110.5 122V956"/>
<path d="M1121.5 122V956"/>
<path d="M1132.5 122V956"/>
<path d="M1142.5 122V956"/>
<path d="M1153.5 122V956"/>
<path d="M1175.5 122V956"/>
<path d="M1185.5 122V956"/>
<path d="M1196.5 122V956"/>
<path d="M1207.5 122V956"/>
<path d="M1218.5 122V956"/>
<path d="M1228.5 122V956"/>
<path d="M1239.5 122V956"/>
<path d="M1250.5 122V956"/>
<path d="M1261.5 122V956"/>
<path d="M1282.5 122V956"/>
<path d="M1293.5 122V956"/>
<path d="M1304.5 122V956"/>
<path d="M1314.5 122V956"/>
<path d="M1325.5 122V956"/>
<path d="M1336.5 122V956"/>
<path d="M1347.5 122V956"/>
<path d="M1357.5 122V956"/>
<path d="M1368.5 122V956"/>
<path d="M1390.5 122V956"/>
<path d="M1400.5 122V956"/>
<path d="M1411.5 122V956"/>
<path d="M1422.5 122V956"/>
<path d="M1432.5 122V956"/>
<path d="M1443.5 122V956"/>
<path d="M1454.5 122V956"/>
<path d="M1465.5 122V956"/>
<path d="M1475.5 122V956"/>
<path d="M1497.5 122V956"/>
<path d="M1508.5 122V956"/>
<path d="M1519.5 122V956"/>
<path d="M1529.5 122V956"/>
<path d="M1540.5 122V956"/>
<path d="M1551.5 122V956"/>
<path d="M1561.5 122V956"/>
<path d="M1572.5 122V956"/>
<path d="M1583.5 122V956"/>
<path d="M1604.5 122V956"/>
<path d="M1615.5 122V956"/>
<path d="M1626.5 122V956"/>
<path d="M1637.5 122V956"/>
<path d="M1648.5 122V956"/>
<path d="M1658.5 122V956"/>
<path d="M1669.5 122V956"/>
<path d="M1680.5 122V956"/>
<path d="M1691.5 122V956"/>
<path d="M1712.5 122V956"/>
<path d="M1723.5 122V956"/>
<path d="M1734.5 122V956"/>
<path d="M1744.5 122V956"/>
<path d="M1755.5 122V956"/>
<path d="M1766.5 122V956"/>
<path d="M1777.5 122V956"/>
<path d="M1787.5 122V956"/>
<path d="M1798.5 122V956"/>
<path d="M1820.5 122V956"/>
<path d="M1830.5 122V956"/>
<path d="M1841.5 122V956"/>
<path d="M1852.5 122V956"/>
<path d="M1862.5 122V956"/>
</g><g stroke-dashoffset="4.95">
<path d="M834 120.5H1866"/>
<path d="M834 131.5H1866"/>
<path d="M834 141.5H1866"/>
<path d="M834 152.5H1866"/>
<path d="M834 163.5H1866"/>
<path d="M834 174.5H1866"/>
<path d="M834 195.5H1866"/>
<path d="M834 206.5H1866"/>
<path d="M834 217.5H1866"/>
<path d="M834 227.5H1866"/>
<path d="M834 238.5H1866"/>
<path d="M834 249.5H1866"/>
<path d="M834 260.5H1866"/>
<path d="M834 270.5H1866"/>
<path d="M834 281.5H1866"/>
<path d="M834 303.5H1866"/>
<path d="M834 313.5H1866"/>
<path d="M834 324.5H1866"/>
<path d="M834 335.5H1866"/>
<path d="M834 346.5H1866"/>
<path d="M834 356.5H1866"/>
<path d="M834 367.5H1866"/>
<path d="M834 378.5H1866"/>
<path d="M834 389.5H1866"/>
<path d="M834 410.5H1866"/>
<path d="M834 421.5H1866"/>
<path d="M834 432.5H1866"/>
<path d="M834 442.5H1866"/>
<path d="M834 453.5H1866"/>
<path d="M834 464.5H1866"/>
<path d="M834 475.5H1866"/>
<path d="M834 485.5H1866"/>
<path d="M834 496.5H1866"/>
<path d="M834 517.5H1866"/>
<path d="M834 528.5H1866"/>
<path d="M834 539.5H1866"/>
<path d="M834 550.5H1866"/>
<path d="M834 561.5H1866"/>
<path d="M834 571.5H1866"/>
<path d="M834 582.5H1866"/>
<path d="M834 593.5H1866"/>
<path d="M834 603.5H1866"/>
<path d="M834 625.5H1866"/>
<path d="M834 636.5H1866"/>
<path d="M834 647.5H1866"/>
<path d="M834 657.5H1866"/>
<path d="M834 668.5H1866"/>
<path d="M834 679.5H1866"/>
<path d="M834 690.5H1866"/>
<path d="M834 700.5H1866"/>
<path d="M834 711.5H1866"/>
<path d="M834 733.5H1866"/>
<path d="M834 743.5H1866"/>
<path d="M834 754.5H1866"/>
<path d="M834 765.5H1866"/>
<path d="M834 776.5H1866"/>
<path d="M834 786.5H1866"/>
<path d="M834 797.5H1866"/>
<path d="M834 808.5H1866"/>
<path d="M834 819.5H1866"/>
<path d="M834 840.5H1866"/>
<path d="M834 851.5H1866"/>
<path d="M834 861.5H1866"/>
<path d="M834 872.5H1866"/>
<path d="M834 883.5H1866"/>
<path d="M834 894.5H1866"/>
<path d="M834 904.5H1866"/>
<path d="M834 915.5H1866"/>
<path d="M834 926.5H1866"/>
<path d="M834 948.5H1866"/>
</g>
</g><g stroke="#969492" stroke-width="1" shape-rendering="crispEdges">
<path d="M841.5 122V956"/>
<path d="M949.5 122V956"/>
<path d="M1056.5 122V956"/>
<path d="M1164.5 122V956"/>
<path d="M1271.5 122V956"/>
<path d="M1379.5 122V956"/>
<path d="M1486.5 122V956"/>
<path d="M1594.5 122V956"/>
<path d="M1701.5 122V956"/>
<path d="M1809.5 122V956"/>
<path d="M834 184.5H1866"/>
<path d="M834 292.5H1866"/>
<path d="M834 399.5H1866"/>
<path d="M834 507.5H1866"/>
<path d="M834 614.5H1866"/>
<path d="M834 722.5H1866"/>
<path d="M834 829.5H1866"/>
<path d="M834 937.5H1866"/>
</g>
<polyline points="841.5,120.5 841.5,141.5" fill="none" stroke="#00007c" stroke-width="1" />
<polyline points="830.8,141.5 852.2,141.5" fill="none" stroke="#0000cc" stroke-width="1" />
<polyline points="830.8,152.5 852.2,152.5" fill="none" stroke="#0000cc" stroke-width="1" />
<polyline points="841.5,152.5 841.5,174.5" fill="none" stroke="#000000" stroke-width="1" />
<polyline points="841.5,174.5 841.5,184.5" fill="none" stroke="#800000" stroke-width="1" />
<polyline points="830.8,184.5 852.2,184.5" fill="none" stroke="#800000" stroke-width="1" />
<polyline points="834,187.7 849,187.7" fill="none" stroke="#800000" stroke-width="1" />
<polyline points="837,190.9 846,190.9" fill="none" stroke="#800000" stroke-width="1" />
<polyline points="840.5,194.3 842.5,194.3" fill="none" stroke="#800000" stroke-width="1" />
<text x="853.8" y="138.2" class="ts" >C16</text>
<text x="854" y="148.8" class="ts" textLength="18.5" lengthAdjust="spacingAndGlyphs" >100n</text>
<polyline points="895.5,120.5 895.5,206.5 960.5,206.5 960.5,292.5 938.5,292.5" fill="none" stroke="#00007c" stroke-width="1" />
<polyline points="970.5,120.5 970.5,260.5 938.5,260.5" fill="none" stroke="#00007c" stroke-width="1" />
<polyline points="992.5,120.5 992.5,281.5 938.5,281.5" fill="none" stroke="#00007c" stroke-width="1" />
<polyline points="916.8,131.5 938.2,131.5" fill="none" stroke="#0000cc" stroke-width="1" />
<polyline points="927.5,131.5 927.5,152.5" fill="none" stroke="#000000" stroke-width="1" />
<polyline points="927.5,152.5 927.5,163.5" fill="none" stroke="#800000" stroke-width="1" />
<polyline points="916.8,163.5 938.2,163.5" fill="none" stroke="#800000" stroke-width="1" />
<polyline points="920,166.7 935,166.7" fill="none" stroke="#800000" stroke-width="1" />
<polyline points="923,169.9 932,169.9" fill="none" stroke="#800000" stroke-width="1" />
<polyline points="926.5,173.3 928.5,173.3" fill="none" stroke="#800000" stroke-width="1" />
<polyline points="1002.8,131.5 1024.2,131.5" fill="none" stroke="#0000cc" stroke-width="1" />
<polyline points="1013.5,131.5 1013.5,152.5" fill="none" stroke="#000000" stroke-width="1" />
<polyline points="1013.5,152.5 1013.5,163.5" fill="none" stroke="#800000" stroke-width="1" />
<polyline points="1002.8,163.5 1024.2,163.5" fill="none" stroke="#800000" stroke-width="1" />
<polyline points="1006,166.7 1021,166.7" fill="none" stroke="#800000" stroke-width="1" />
<polyline points="1009,169.9 1018,169.9" fill="none" stroke="#800000" stroke-width="1" />
<polyline points="1012.5,173.3 1014.5,173.3" fill="none" stroke="#800000" stroke-width="1" />
<polyline points="1088.8,131.5 1110.2,131.5" fill="none" stroke="#0000cc" stroke-width="1" />
<polyline points="1099.5,131.5 1099.5,152.5" fill="none" stroke="#000000" stroke-width="1" />
<polyline points="1099.5,152.5 1099.5,163.5" fill="none" stroke="#800000" stroke-width="1" />
<polyline points="1088.8,163.5 1110.2,163.5" fill="none" stroke="#800000" stroke-width="1" />
<polyline points="1092,166.7 1107,166.7" fill="none" stroke="#800000" stroke-width="1" />
<polyline points="1095,169.9 1104,169.9" fill="none" stroke="#800000" stroke-width="1" />
<polyline points="1098.5,173.3 1100.5,173.3" fill="none" stroke="#800000" stroke-width="1" />
<text x="940.5" y="127.5" class="ts" textLength="18.5" lengthAdjust="spacingAndGlyphs" >100n</text>
<text x="1026.5" y="127.5" class="ts" textLength="18.5" lengthAdjust="spacingAndGlyphs" >100n</text>
<text x="1115" y="126.5" class="ts" textLength="35" lengthAdjust="spacingAndGlyphs" >1uF/16V</text>
<ellipse cx="1487" cy="122" rx="9" ry="1.8" fill="#8a1010"/>
<polyline points="1218.5,150 1218.5,174.5" fill="none" stroke="#800000" stroke-width="1" />
<polyline points="1207.8,174.5 1229.2,174.5" fill="none" stroke="#800000" stroke-width="1" />
<polyline points="1211,177.7 1226,177.7" fill="none" stroke="#800000" stroke-width="1" />
<polyline points="1214,180.9 1223,180.9" fill="none" stroke="#800000" stroke-width="1" />
<polyline points="1217.5,184.3 1219.5,184.3" fill="none" stroke="#800000" stroke-width="1" />
<path d="M1260.5,150 A11,11.5 0 0 0 1282.5,150" fill="none" stroke="#0000ff" stroke-width="4"/>
<text x="1260.8" y="172" class="ts" textLength="56" lengthAdjust="spacingAndGlyphs" >4MMx1.5MM</text>
<rect x="874.5" y="238.3" width="31.1" height="95.7" fill="#ffffb0" stroke="#8a2a00" stroke-width="1.25"/>
<text x="874.4" y="236.3" class="ts" >J8</text>
<text x="874.4" y="343.8" class="ts" textLength="98.7" lengthAdjust="spacingAndGlyphs" >HDR.FEMALE 1X8 2.54</text>
<polyline points="906.5,249.5 938.5,249.5" fill="none" stroke="#000000" stroke-width="1" />
<text x="916.7" y="247.3" class="tp" text-anchor="middle" >1</text>
<text x="899" y="252.2" class="tp" text-anchor="end" >1</text>
<polyline points="906.5,260.5 938.5,260.5" fill="none" stroke="#000000" stroke-width="1" />
<text x="916.7" y="258.3" class="tp" text-anchor="middle" >2</text>
<text x="899" y="263.2" class="tp" text-anchor="end" >2</text>
<polyline points="906.5,270.5 938.5,270.5" fill="none" stroke="#000000" stroke-width="1" />
<text x="916.7" y="268.3" class="tp" text-anchor="middle" >3</text>
<text x="899" y="273.2" class="tp" text-anchor="end" >3</text>
<polyline points="906.5,281.5 938.5,281.5" fill="none" stroke="#000000" stroke-width="1" />
<text x="916.7" y="279.3" class="tp" text-anchor="middle" >4</text>
<text x="899" y="284.2" class="tp" text-anchor="end" >4</text>
<polyline points="906.5,292.5 938.5,292.5" fill="none" stroke="#000000" stroke-width="1" />
<text x="916.7" y="290.3" class="tp" text-anchor="middle" >5</text>
<text x="899" y="295.2" class="tp" text-anchor="end" >5</text>
<polyline points="906.5,303.5 938.5,303.5" fill="none" stroke="#000000" stroke-width="1" />
<text x="916.7" y="301.3" class="tp" text-anchor="middle" >6</text>
<text x="899" y="306.2" class="tp" text-anchor="end" >6</text>
<polyline points="906.5,313.5 938.5,313.5" fill="none" stroke="#000000" stroke-width="1" />
<text x="916.7" y="311.3" class="tp" text-anchor="middle" >7</text>
<text x="899" y="316.2" class="tp" text-anchor="end" >7</text>
<polyline points="906.5,324.5 938.5,324.5" fill="none" stroke="#000000" stroke-width="1" />
<text x="916.7" y="322.3" class="tp" text-anchor="middle" >8</text>
<text x="899" y="327.2" class="tp" text-anchor="end" >8</text>
<path d="M934.5,245.5 l8,8 M934.5,253.5 l8,-8" stroke="#ff3030" stroke-width="0.9" stroke-dasharray="2.5 1.2" fill="none" opacity="0.85"/>
<path d="M934.5,320.5 l8,8 M934.5,328.5 l8,-8" stroke="#ff3030" stroke-width="0.9" stroke-dasharray="2.5 1.2" fill="none" opacity="0.85"/>
<polyline points="938.5,270.5 1024.5,270.5" fill="none" stroke="#00007c" stroke-width="1" />
<text x="1014.4" y="268.8" class="ta" textLength="50.8" lengthAdjust="spacingAndGlyphs" >328P_RESETn</text>
<circle cx="938.5" cy="281.5" r="2.05" fill="#000078"/>
<polyline points="938.5,303.5 1003.5,303.5 1003.5,356.5" fill="none" stroke="#00007c" stroke-width="1" />
<polyline points="938.5,313.5 1003.5,313.5" fill="none" stroke="#00007c" stroke-width="1" />
<circle cx="1003.5" cy="313.5" r="2.05" fill="#000078"/>
<polyline points="1003.5,356.5 1003.5,367.5" fill="none" stroke="#800000" stroke-width="1" />
<polyline points="992.8,367.5 1014.2,367.5" fill="none" stroke="#800000" stroke-width="1" />
<polyline points="996,370.7 1011,370.7" fill="none" stroke="#800000" stroke-width="1" />
<polyline points="999,373.9 1008,373.9" fill="none" stroke="#800000" stroke-width="1" />
<polyline points="1002.5,377.3 1004.5,377.3" fill="none" stroke="#800000" stroke-width="1" />
<text x="1131.2" y="384" class="tb" textLength="110" lengthAdjust="spacingAndGlyphs" >USER LED</text>
<text x="831.2" y="415.8" class="tb" textLength="131.2" lengthAdjust="spacingAndGlyphs" >POWER LED</text>
<text x="981.5" y="759.8" class="tb" textLength="143.4" lengthAdjust="spacingAndGlyphs" >RESET (16U2)</text>
<text x="1819.8" y="265.2" class="tb" textLength="47.3" lengthAdjust="spacingAndGlyphs" >328P</text>
<text x="1786.6" y="695.5" class="tb" textLength="83.8" lengthAdjust="spacingAndGlyphs" >RESET (</text>
<polyline points="1427,206.5 1438,206.5" fill="none" stroke="#800000" stroke-width="1" />
<polyline points="1432.5,206.5 1432.5,217.5" fill="none" stroke="#800000" stroke-width="1" />
<text x="1414.8" y="203.9" class="tr" textLength="35.6" lengthAdjust="spacingAndGlyphs" >+5V/3V3</text>
<polyline points="1432.5,217.5 1465.5,217.5" fill="none" stroke="#000000" stroke-width="1" />
<polyline points="1497.5,217.5 1529.5,217.5" fill="none" stroke="#000000" stroke-width="1" />
<polyline points="1465.5,209.5 1465.5,225.5" fill="none" stroke="#0000ff" stroke-width="1.6" />
<polyline points="1497.5,209.5 1497.5,225.5" fill="none" stroke="#0000ff" stroke-width="1.6" />
<polyline points="1464.7,209.5 1498.3,209.5" fill="none" stroke="#0000ff" stroke-width="2.6" />
<polyline points="1464.7,225.7 1498.3,225.7" fill="none" stroke="#0000ff" stroke-width="2.6" />
<text x="1462.1" y="203.3" class="ts" >FB2</text>
<text x="1461.9" y="238.1" class="ts" textLength="86.6" lengthAdjust="spacingAndGlyphs" >MPZ2012S601AT000</text>
<text x="1456.9" y="214.9" class="tp" text-anchor="end" >1</text>
<text x="1505.1" y="214.9" class="tp" >2</text>
<polyline points="1529.5,217.5 1712.5,217.5 1712.5,303.5" fill="none" stroke="#00007c" stroke-width="1" />
<circle cx="1572.5" cy="217.5" r="2.05" fill="#000078"/>
<circle cx="1658.5" cy="217.5" r="2.05" fill="#000078"/>
<text x="1583.6" y="215" class="tr" textLength="87.5" lengthAdjust="spacingAndGlyphs" >+5V/3V3_328P_VCC</text>
<polyline points="1572.5,217.5 1572.5,238.5" fill="none" stroke="#00007c" stroke-width="1" />
<polyline points="1572.5,238.5 1572.5,240.5" fill="none" stroke="#00007c" stroke-width="1" />
<polyline points="1559.8,240.5 1585.2,240.5" fill="none" stroke="#0000cc" stroke-width="1" />
<polyline points="1559.8,249.5 1585.2,249.5" fill="none" stroke="#0000cc" stroke-width="1" />
<polyline points="1572.5,249.5 1572.5,270.5" fill="none" stroke="#000000" stroke-width="1" />
<polyline points="1572.5,270.5 1572.5,281.5" fill="none" stroke="#800000" stroke-width="1" />
<polyline points="1561.8,281.5 1583.2,281.5" fill="none" stroke="#800000" stroke-width="1" />
<polyline points="1565,284.7 1580,284.7" fill="none" stroke="#800000" stroke-width="1" />
<polyline points="1568,287.9 1577,287.9" fill="none" stroke="#800000" stroke-width="1" />
<polyline points="1571.5,291.3 1573.5,291.3" fill="none" stroke="#800000" stroke-width="1" />
<polyline points="1572.5,249.5 1572.5,260.5" fill="none" stroke="#000000" stroke-width="1" />
<text x="1586.6" y="235" class="ts" >C19</text>
<text x="1586.6" y="245.9" class="ts" textLength="38" lengthAdjust="spacingAndGlyphs" >10uF/16V</text>
<polyline points="1658.5,217.5 1658.5,238.5" fill="none" stroke="#00007c" stroke-width="1" />
<polyline points="1647.8,238.5 1669.2,238.5" fill="none" stroke="#0000cc" stroke-width="1" />
<polyline points="1647.8,249.5 1669.2,249.5" fill="none" stroke="#0000cc" stroke-width="1" />
<polyline points="1658.5,249.5 1658.5,270.5" fill="none" stroke="#00007c" stroke-width="1" />
<polyline points="1658.5,270.5 1669.5,270.5" fill="none" stroke="#800000" stroke-width="1" />
<polyline points="1669.5,259.8 1669.5,281.2" fill="none" stroke="#800000" stroke-width="1" />
<polyline points="1672.7,263 1672.7,278" fill="none" stroke="#800000" stroke-width="1" />
<polyline points="1675.9,266 1675.9,275" fill="none" stroke="#800000" stroke-width="1" />
<polyline points="1679.3,269.5 1679.3,271.5" fill="none" stroke="#800000" stroke-width="1" />
<text x="1670.8" y="235" class="ts" >C20</text>
<text x="1670.8" y="245.9" class="ts" textLength="18.5" lengthAdjust="spacingAndGlyphs" >100n</text>
<polyline points="1374,281.5 1385,281.5" fill="none" stroke="#800000" stroke-width="1" />
<polyline points="1379.5,281.5 1379.5,292.5" fill="none" stroke="#800000" stroke-width="1" />
<text x="1361.8" y="278.9" class="tr" textLength="35.6" lengthAdjust="spacingAndGlyphs" >+5V/3V3</text>
<polyline points="1379.5,292.5 1411.5,292.5" fill="none" stroke="#000000" stroke-width="1" />
<polyline points="1443.5,292.5 1475.5,292.5" fill="none" stroke="#000000" stroke-width="1" />
<polyline points="1411.5,284.5 1411.5,300.5" fill="none" stroke="#0000ff" stroke-width="1.6" />
<polyline points="1443.5,284.5 1443.5,300.5" fill="none" stroke="#0000ff" stroke-width="1.6" />
<polyline points="1410.7,284.5 1444.3,284.5" fill="none" stroke="#0000ff" stroke-width="2.6" />
<polyline points="1410.7,300.7 1444.3,300.7" fill="none" stroke="#0000ff" stroke-width="2.6" />
<text x="1408.1" y="278.3" class="ts" >FB3</text>
<text x="1379.3" y="313.1" class="ts" textLength="86.6" lengthAdjust="spacingAndGlyphs" >MPZ2012S601AT000</text>
<text x="1402.9" y="289.9" class="tp" text-anchor="end" >1</text>
<text x="1451.1" y="289.9" class="tp" >2</text>
<polyline points="1475.5,292.5 1669.5,292.5 1669.5,313.5 1712.5,313.5 1712.5,324.5" fill="none" stroke="#00007c" stroke-width="1" />
<circle cx="1540.5" cy="292.5" r="2.05" fill="#000078"/>
<circle cx="1626.5" cy="292.5" r="2.05" fill="#000078"/>
<text x="1475.8" y="290" class="tr" textLength="35.6" lengthAdjust="spacingAndGlyphs" >+5V/3V3</text>
<polyline points="1540.5,292.5 1540.5,313.5" fill="none" stroke="#00007c" stroke-width="1" />
<polyline points="1527.8,315.5 1553.2,315.5" fill="none" stroke="#0000cc" stroke-width="1" />
<polyline points="1527.8,324.5 1553.2,324.5" fill="none" stroke="#0000cc" stroke-width="1" />
<polyline points="1540.5,324.5 1540.5,346.5" fill="none" stroke="#000000" stroke-width="1" />
<polyline points="1540.5,346.5 1540.5,356.5" fill="none" stroke="#800000" stroke-width="1" />
<polyline points="1529.8,356.5 1551.2,356.5" fill="none" stroke="#800000" stroke-width="1" />
<polyline points="1533,359.7 1548,359.7" fill="none" stroke="#800000" stroke-width="1" />
<polyline points="1536,362.9 1545,362.9" fill="none" stroke="#800000" stroke-width="1" />
<polyline points="1539.5,366.3 1541.5,366.3" fill="none" stroke="#800000" stroke-width="1" />
<polyline points="1540.5,313.5 1540.5,315.5" fill="none" stroke="#00007c" stroke-width="1" />
<text x="1554.3" y="310.6" class="ts" >C22</text>
<text x="1554.3" y="321.4" class="ts" textLength="38" lengthAdjust="spacingAndGlyphs" >10uF/16V</text>
<polyline points="1626.5,292.5 1626.5,313.5" fill="none" stroke="#00007c" stroke-width="1" />
<polyline points="1615.8,313.5 1637.2,313.5" fill="none" stroke="#0000cc" stroke-width="1" />
<polyline points="1615.8,324.5 1637.2,324.5" fill="none" stroke="#0000cc" stroke-width="1" />
<polyline points="1626.5,324.5 1626.5,346.5" fill="none" stroke="#000000" stroke-width="1" />
<polyline points="1626.5,346.5 1626.5,356.5" fill="none" stroke="#800000" stroke-width="1" />
<polyline points="1615.8,356.5 1637.2,356.5" fill="none" stroke="#800000" stroke-width="1" />
<polyline points="1619,359.7 1634,359.7" fill="none" stroke="#800000" stroke-width="1" />
<polyline points="1622,362.9 1631,362.9" fill="none" stroke="#800000" stroke-width="1" />
<polyline points="1625.5,366.3 1627.5,366.3" fill="none" stroke="#800000" stroke-width="1" />
<text x="1638" y="310.6" class="ts" >C23</text>
<text x="1638" y="321.4" class="ts" textLength="18.5" lengthAdjust="spacingAndGlyphs" >100n</text>
<polyline points="1492,313.5 1503,313.5" fill="none" stroke="#800000" stroke-width="1" />
<polyline points="1497.5,313.5 1497.5,324.5" fill="none" stroke="#800000" stroke-width="1" />
<text x="1479.9" y="310.9" class="tr" textLength="35.4" lengthAdjust="spacingAndGlyphs" >+5V/3V3</text>
<polyline points="1497.5,324.5 1497.5,335.5" fill="none" stroke="#000000" stroke-width="1" />
<polyline points="1497.5,335.5 1494.1,338.73 1500.9,345.18 1494.1,351.62 1500.9,358.07 1494.1,364.52 1497.5,367.75" fill="none" stroke="#0000cc" stroke-width="1" stroke-linejoin="miter"/>
<polyline points="1497.5,367.5 1497.5,399.5 1680.5,399.5 1680.5,389.5 1712.5,389.5" fill="none" stroke="#00007c" stroke-width="1" />
<circle cx="1497.5" cy="378.5" r="2.05" fill="#000078"/>
<polyline points="1432.5,378.5 1497.5,378.5" fill="none" stroke="#00007c" stroke-width="1" />
<text x="1432.8" y="376.3" class="ta" textLength="51" lengthAdjust="spacingAndGlyphs" >328P_RESETn</text>
<text x="1475.2" y="343.2" class="ts" >R17</text>
<text x="1476.2" y="364.8" class="ts" textLength="15.6" lengthAdjust="spacingAndGlyphs" >10K</text>
<polyline points="1561.5,378.5 1594.5,378.5" fill="none" stroke="#800000" stroke-width="1" />
<polyline points="1561.5,367.8 1561.5,389.2" fill="none" stroke="#800000" stroke-width="1" />
<polyline points="1558.3,371 1558.3,386" fill="none" stroke="#800000" stroke-width="1" />
<polyline points="1555.1,374 1555.1,383" fill="none" stroke="#800000" stroke-width="1" />
<polyline points="1551.7,377.5 1551.7,379.5" fill="none" stroke="#800000" stroke-width="1" />
<polyline points="1594.5,367.8 1594.5,389.2" fill="none" stroke="#0000cc" stroke-width="1" />
<polyline points="1604.5,367.8 1604.5,389.2" fill="none" stroke="#0000cc" stroke-width="1" />
<polyline points="1604.5,378.5 1669.5,378.5 1669.5,346.5" fill="none" stroke="#00007c" stroke-width="1" />
<polyline points="1604.5,378.5 1615.5,378.5" fill="none" stroke="#00007c" stroke-width="1" />
<text x="1582" y="364.2" class="ts" >C24</text>
<text x="1582.6" y="398.8" class="ts" textLength="18.5" lengthAdjust="spacingAndGlyphs" >100n</text>
<polyline points="1664,335.5 1675,335.5" fill="none" stroke="#800000" stroke-width="1" />
<polyline points="1669.5,335.5 1669.5,346.5" fill="none" stroke="#800000" stroke-width="1" />
<text x="1657.4" y="333.2" class="ta" textLength="23.6" lengthAdjust="spacingAndGlyphs" >+AREF</text>
<circle cx="1669.5" cy="346.5" r="2.05" fill="#000078"/>
<polyline points="1669.5,346.5 1712.5,346.5" fill="none" stroke="#00007c" stroke-width="1" />
<polyline points="1368.5,421.5 1368.5,410.5 1432.5,410.5" fill="none" stroke="#00007c" stroke-width="1" />
<polyline points="1357.8,421.5 1379.2,421.5" fill="none" stroke="#800000" stroke-width="1" />
<polyline points="1361,424.7 1376,424.7" fill="none" stroke="#800000" stroke-width="1" />
<polyline points="1364,427.9 1373,427.9" fill="none" stroke="#800000" stroke-width="1" />
<polyline points="1367.5,431.3 1369.5,431.3" fill="none" stroke="#800000" stroke-width="1" />
<polyline points="1368.5,420.5 1368.5,421.5" fill="none" stroke="#800000" stroke-width="1" />
<polyline points="1432.5,397.9 1432.5,423.1" fill="none" stroke="#0000cc" stroke-width="1" />
<polyline points="1441.5,397.9 1441.5,423.1" fill="none" stroke="#0000cc" stroke-width="1" />
<text x="1400" y="407.8" class="ts" >C25</text>
<text x="1454.2" y="407.8" class="ts" textLength="19.8" lengthAdjust="spacingAndGlyphs" >18pF</text>
<text x="1486.7" y="407.8" class="tr" textLength="90.8" lengthAdjust="spacingAndGlyphs" >328P_16MHZ_XTAL2</text>
<polyline points="1368.5,475.5 1368.5,464.5 1432.5,464.5" fill="none" stroke="#00007c" stroke-width="1" />
<polyline points="1357.8,475.5 1379.2,475.5" fill="none" stroke="#800000" stroke-width="1" />
<polyline points="1361,478.7 1376,478.7" fill="none" stroke="#800000" stroke-width="1" />
<polyline points="1364,481.9 1373,481.9" fill="none" stroke="#800000" stroke-width="1" />
<polyline points="1367.5,485.3 1369.5,485.3" fill="none" stroke="#800000" stroke-width="1" />
<polyline points="1368.5,474.5 1368.5,475.5" fill="none" stroke="#800000" stroke-width="1" />
<polyline points="1432.5,451.9 1432.5,477.1" fill="none" stroke="#0000cc" stroke-width="1" />
<polyline points="1441.5,451.9 1441.5,477.1" fill="none" stroke="#0000cc" stroke-width="1" />
<text x="1410.8" y="461.8" class="ts" >C26</text>
<text x="1443.7" y="461.8" class="ts" textLength="19.8" lengthAdjust="spacingAndGlyphs" >18pF</text>
<text x="1497.5" y="461.8" class="tr" textLength="90" lengthAdjust="spacingAndGlyphs" >328P_16MHZ_XTAL1</text>
<polyline points="1442.5,410.5 1691.5,410.5 1691.5,432.5 1712.5,432.5" fill="none" stroke="#00007c" stroke-width="1" />
<polyline points="1441.5,410.5 1454.5,410.5" fill="none" stroke="#00007c" stroke-width="1" />
<polyline points="1443.5,464.5 1691.5,464.5 1691.5,453.5 1712.5,453.5" fill="none" stroke="#00007c" stroke-width="1" />
<polyline points="1441.5,464.5 1454.5,464.5" fill="none" stroke="#00007c" stroke-width="1" />
<circle cx="1604.5" cy="410.5" r="2.05" fill="#000078"/>
<circle cx="1604.5" cy="464.5" r="2.05" fill="#000078"/>
<polyline points="1604.5,410.5 1604.5,421.5" fill="none" stroke="#00007c" stroke-width="1" />
<polyline points="1599,421.5 1610,421.5" fill="none" stroke="#0000cc" stroke-width="1" />
<rect x="1594" y="426.5" width="21" height="11" fill="none" stroke="#0000cc" stroke-width="1.1"/>
<polyline points="1599,442.5 1610,442.5" fill="none" stroke="#0000cc" stroke-width="1" />
<polyline points="1604.5,442.5 1604.5,464.5" fill="none" stroke="#00007c" stroke-width="1" />
<text x="1617.6" y="429" class="ts" >Y2</text>
<text x="1551" y="473.4" class="ts" textLength="109" lengthAdjust="spacingAndGlyphs" >ABM7-16.000MHZ-D2Y-T</text>
<polyline points="1669.5,416 1669.5,427" fill="none" stroke="#000000" stroke-width="1" />
<polyline points="1669.5,427 1666.1,430.23 1672.9,436.68 1666.1,443.12 1672.9,449.57 1666.1,456.02 1669.5,459.25" fill="none" stroke="#0000cc" stroke-width="1" stroke-linejoin="miter"/>
<polyline points="1669.5,459.25 1669.5,468.5" fill="none" stroke="#000000" stroke-width="1" />
<text x="1673.4" y="434" class="ts" >R18</text>
<text x="1675" y="445" class="ts" textLength="11.6" lengthAdjust="spacingAndGlyphs" >1M</text>
<rect x="1744.5" y="292.5" width="140" height="245.9" fill="#ffffb0" stroke="#8a2a00" stroke-width="1.2"/>
<text x="1744" y="290" class="ts" >U3</text>
<text x="1744.4" y="547.8" class="ts" textLength="76.4" lengthAdjust="spacingAndGlyphs" >ATMEGA328P-PU</text>
<polyline points="1712.5,303.5 1744.5,303.5" fill="none" stroke="#000000" stroke-width="1" />
<text x="1736" y="301.1" class="tp" text-anchor="end" >7</text>
<text x="1751.8" y="305.2" class="tp" textLength="16" lengthAdjust="spacingAndGlyphs" >VCC</text>
<polyline points="1712.5,324.5 1744.5,324.5" fill="none" stroke="#000000" stroke-width="1" />
<text x="1736" y="322.1" class="tp" text-anchor="end" >20</text>
<text x="1751.8" y="326.2" class="tp" textLength="21.2" lengthAdjust="spacingAndGlyphs" >AVCC</text>
<polyline points="1712.5,346.5 1744.5,346.5" fill="none" stroke="#000000" stroke-width="1" />
<text x="1736" y="344.1" class="tp" text-anchor="end" >21</text>
<text x="1751.8" y="348.2" class="tp" textLength="20" lengthAdjust="spacingAndGlyphs" >AREF</text>
<polyline points="1712.5,389.5 1744.5,389.5" fill="none" stroke="#000000" stroke-width="1" />
<text x="1736" y="387.1" class="tp" text-anchor="end" >1</text>
<text x="1751.8" y="391.2" class="tp" textLength="50.6" lengthAdjust="spacingAndGlyphs" >PC6(PCINT14/</text>
<polyline points="1712.5,432.5 1744.5,432.5" fill="none" stroke="#000000" stroke-width="1" />
<text x="1736" y="430.1" class="tp" text-anchor="end" >10</text>
<text x="1751.8" y="434.2" class="tp" textLength="97.4" lengthAdjust="spacingAndGlyphs" >PB7/PCINT7/XTAL2/TOSC2</text>
<polyline points="1712.5,453.5 1744.5,453.5" fill="none" stroke="#000000" stroke-width="1" />
<text x="1736" y="451.1" class="tp" text-anchor="end" >9</text>
<text x="1751.8" y="455.2" class="tp" textLength="97" lengthAdjust="spacingAndGlyphs" >PB6/PCINT6/XTAL1/TOSC1</text>
<polyline points="1712.5,517.5 1744.5,517.5" fill="none" stroke="#000000" stroke-width="1" />
<text x="1736" y="515.1" class="tp" text-anchor="end" >8</text>
<text x="1751.8" y="519.2" class="tp" textLength="24.4" lengthAdjust="spacingAndGlyphs" >GND_1</text>
<polyline points="1712.5,528.5 1744.5,528.5" fill="none" stroke="#000000" stroke-width="1" />
<text x="1736" y="526.1" class="tp" text-anchor="end" >22</text>
<text x="1751.8" y="530.2" class="tp" textLength="24.4" lengthAdjust="spacingAndGlyphs" >GND_2</text>
<text x="1802.4" y="391.2" class="tp" textLength="25.4" lengthAdjust="spacingAndGlyphs" >RESET</text>
<text x="1827.8" y="391.2" class="tp" >)</text>
<polyline points="1802.4,384.1 1827.8,384.1" fill="none" stroke="#111" stroke-width="0.8" />
<polyline points="1712.5,517.5 1712.5,539.5" fill="none" stroke="#00007c" stroke-width="1" />
<circle cx="1712.5" cy="528.5" r="2.05" fill="#000078"/>
<polyline points="1712.5,532.5 1712.5,539.5" fill="none" stroke="#800000" stroke-width="1" />
<polyline points="1701.8,539.5 1723.2,539.5" fill="none" stroke="#800000" stroke-width="1" />
<polyline points="1705,542.7 1720,542.7" fill="none" stroke="#800000" stroke-width="1" />
<polyline points="1708,545.9 1717,545.9" fill="none" stroke="#800000" stroke-width="1" />
<polyline points="1711.5,549.3 1713.5,549.3" fill="none" stroke="#800000" stroke-width="1" />
<polyline points="912,453.5 923,453.5" fill="none" stroke="#800000" stroke-width="1" />
<polyline points="917.5,453.5 917.5,464.5" fill="none" stroke="#800000" stroke-width="1" />
<text x="899.9" y="450.9" class="tr" textLength="35.4" lengthAdjust="spacingAndGlyphs" >+5V/3V3</text>
<polyline points="917.5,464.5 917.5,475.5" fill="none" stroke="#000000" stroke-width="1" />
<polyline points="917.5,475.5 914.1,478.73 920.9,485.18 914.1,491.62 920.9,498.07 914.1,504.52 917.5,507.75" fill="none" stroke="#0000cc" stroke-width="1" stroke-linejoin="miter"/>
<polyline points="917.5,507.5 917.5,517.5" fill="none" stroke="#000000" stroke-width="1" />
<polyline points="917.5,517.5 917.5,539.5" fill="none" stroke="#00007c" stroke-width="1" />
<text x="921.6" y="482.6" class="ts" >R20</text>
<text x="921.6" y="493.4" class="ts" textLength="20" lengthAdjust="spacingAndGlyphs" >560R</text>
<polygon points="906.5,539 928.5,539 917.5,550.5" fill="#0000ff"/>
<polyline points="906.8,550.5 928.2,550.5" fill="none" stroke="#0000cc" stroke-width="1.2" />
<polyline points="922.5,555.7 927.1,559.9" fill="none" stroke="#0000d8" stroke-width="1.1" />
<polygon points="928.4,561.3 928.4,556.9 924,561.3" fill="#0000ff"/>
<polyline points="922.5,566.5 927.1,570.7" fill="none" stroke="#0000d8" stroke-width="1.1" />
<polygon points="928.4,572.1 928.4,567.7 924,572.1" fill="#0000ff"/>
<text x="929.1" y="535.9" class="ts" >D4</text>
<text x="929.3" y="546.8" class="ts" >Green</text>
<polyline points="917.5,550.5 917.5,603.5" fill="none" stroke="#00007c" stroke-width="1" />
<polyline points="917.5,603.5 917.5,614.5" fill="none" stroke="#800000" stroke-width="1" />
<polyline points="906.8,614.5 928.2,614.5" fill="none" stroke="#800000" stroke-width="1" />
<polyline points="910,617.7 925,617.7" fill="none" stroke="#800000" stroke-width="1" />
<polyline points="913,620.9 922,620.9" fill="none" stroke="#800000" stroke-width="1" />
<polyline points="916.5,624.3 918.5,624.3" fill="none" stroke="#800000" stroke-width="1" />
<polyline points="1127,432.5 1138,432.5" fill="none" stroke="#800000" stroke-width="1" />
<polyline points="1132.5,432.5 1132.5,442.5" fill="none" stroke="#800000" stroke-width="1" />
<text x="1114.8" y="429.9" class="tr" textLength="35.6" lengthAdjust="spacingAndGlyphs" >+5V/3V3</text>
<polyline points="1132.5,442.5 1132.5,517.5" fill="none" stroke="#00007c" stroke-width="1" />
<circle cx="1132.5" cy="453.5" r="2.05" fill="#000078"/>
<circle cx="1132.5" cy="507.5" r="2.05" fill="#000078"/>
<polyline points="1132.5,453.5 1185.5,453.5 1185.5,464.5" fill="none" stroke="#00007c" stroke-width="1" />
<polyline points="1185.5,464.5 1185.5,475.5" fill="none" stroke="#000000" stroke-width="1" />
<polyline points="1174.8,475.5 1196.2,475.5" fill="none" stroke="#0000cc" stroke-width="1" />
<polyline points="1174.8,485.5 1196.2,485.5" fill="none" stroke="#0000cc" stroke-width="1" />
<polyline points="1185.5,485.5 1185.5,507.5" fill="none" stroke="#000000" stroke-width="1" />
<polyline points="1185.5,507.5 1185.5,517.5" fill="none" stroke="#800000" stroke-width="1" />
<polyline points="1174.8,517.5 1196.2,517.5" fill="none" stroke="#800000" stroke-width="1" />
<polyline points="1178,520.7 1193,520.7" fill="none" stroke="#800000" stroke-width="1" />
<polyline points="1181,523.9 1190,523.9" fill="none" stroke="#800000" stroke-width="1" />
<polyline points="1184.5,527.3 1186.5,527.3" fill="none" stroke="#800000" stroke-width="1" />
<text x="1196.8" y="471.8" class="ts" >C27</text>
<text x="1196.8" y="482.6" class="ts" textLength="18.5" lengthAdjust="spacingAndGlyphs" >100n</text>
<path d="M1144.5,539.5 L1121.5,539.5 L1121.5,603.5 L1144.5,603.5 A31,32 0 0 0 1144.5,539.5" fill="none" stroke="#0000cc" stroke-width="1.15"/>
<polyline points="1067.5,550.5 1121.5,550.5" fill="none" stroke="#000000" stroke-width="1" />
<rect x="1114.9" y="549" width="5.6" height="3" fill="#fefcf9" stroke="#000" stroke-width="0.9"/>
<polyline points="1114.9,548.3 1114.9,552.7" fill="none" stroke="#000" stroke-width="1.3" />
<polyline points="1067.5,593.5 1121.5,593.5" fill="none" stroke="#000000" stroke-width="1" />
<rect x="1114.9" y="592" width="5.6" height="3" fill="#fefcf9" stroke="#000" stroke-width="0.9"/>
<polyline points="1114.9,591.3 1114.9,595.7" fill="none" stroke="#000" stroke-width="1.3" />
<polyline points="1175.5,571.5 1228.5,571.5" fill="none" stroke="#000000" stroke-width="1" />
<rect x="1176.5" y="570" width="4.6" height="3" fill="#fefcf9" stroke="#000" stroke-width="0.9"/>
<polyline points="1176.2,569.1 1176.2,573.9" fill="none" stroke="#0000a0" stroke-width="1.6" />
<polyline points="1132.5,517.5 1132.5,539.5" fill="none" stroke="#000000" stroke-width="1" />
<polyline points="1132.5,603.5 1132.5,625.5" fill="none" stroke="#000000" stroke-width="1" />
<text x="1112.7" y="547.9" class="tp" text-anchor="end" >1</text>
<text x="1112.7" y="590.9" class="tp" text-anchor="end" >2</text>
<text x="1184.1" y="569.1" class="tp" >4</text>
<text class="tp" transform="translate(1130.6,528.5) rotate(-90)" text-anchor="middle">5</text>
<text class="tp" transform="translate(1130.6,613) rotate(-90)" text-anchor="middle">3</text>
<text x="1100" y="616.8" class="ts" textLength="20.5" lengthAdjust="spacingAndGlyphs" >AND</text>
<text x="1153.4" y="623.2" class="ts" >U4</text>
<text x="1153.4" y="634.1" class="ts" textLength="91" lengthAdjust="spacingAndGlyphs" >SN74AHC1G09DBVR</text>
<polyline points="1024.5,550.5 1067.5,550.5" fill="none" stroke="#00007c" stroke-width="1" />
<polyline points="1067.5,550.5 1067.5,593.5" fill="none" stroke="#00007c" stroke-width="1" />
<circle cx="1067.5" cy="550.5" r="2.05" fill="#000078"/>
<text x="1024.8" y="548.2" class="ta" textLength="14.8" lengthAdjust="spacingAndGlyphs" >SCK</text>
<polyline points="1132.5,625.5 1132.5,636.5" fill="none" stroke="#000000" stroke-width="1" />
<polyline points="1132.5,636.5 1132.5,646.5" fill="none" stroke="#800000" stroke-width="1" />
<polyline points="1121.8,646.5 1143.2,646.5" fill="none" stroke="#800000" stroke-width="1" />
<polyline points="1125,649.7 1140,649.7" fill="none" stroke="#800000" stroke-width="1" />
<polyline points="1128,652.9 1137,652.9" fill="none" stroke="#800000" stroke-width="1" />
<polyline points="1131.5,656.3 1133.5,656.3" fill="none" stroke="#800000" stroke-width="1" />
<polyline points="1228.5,571.5 1250.5,571.5 1250.5,528.5" fill="none" stroke="#00007c" stroke-width="1" />
<polyline points="1245,432.5 1256,432.5" fill="none" stroke="#800000" stroke-width="1" />
<polyline points="1250.5,432.5 1250.5,442.5" fill="none" stroke="#800000" stroke-width="1" />
<text x="1232.8" y="429.9" class="tr" textLength="35.6" lengthAdjust="spacingAndGlyphs" >+5V/3V3</text>
<polyline points="1250.5,442.5 1250.5,453.5" fill="none" stroke="#000000" stroke-width="1" />
<polyline points="1250.5,453.5 1247.1,456.73 1253.9,463.18 1247.1,469.62 1253.9,476.07 1247.1,482.52 1250.5,485.75" fill="none" stroke="#0000cc" stroke-width="1" stroke-linejoin="miter"/>
<polyline points="1250.5,485.5 1250.5,496.5" fill="none" stroke="#000000" stroke-width="1" />
<polyline points="1250.5,496.5 1250.5,517.5" fill="none" stroke="#00007c" stroke-width="1" />
<text x="1254.2" y="460.8" class="ts" >R19</text>
<text x="1254.2" y="471.6" class="ts" textLength="20" lengthAdjust="spacingAndGlyphs" >560R</text>
<polygon points="1239.5,517 1261.5,517 1250.5,528.5" fill="#0000ff"/>
<polyline points="1239.8,528.5 1261.2,528.5" fill="none" stroke="#0000cc" stroke-width="1.2" />
<polyline points="1255.5,533.7 1260.1,537.9" fill="none" stroke="#0000d8" stroke-width="1.1" />
<polygon points="1261.4,539.3 1261.4,534.9 1257,539.3" fill="#0000ff"/>
<polyline points="1255.5,544.5 1260.1,548.7" fill="none" stroke="#0000d8" stroke-width="1.1" />
<polygon points="1261.4,550.1 1261.4,545.7 1257,550.1" fill="#0000ff"/>
<text x="1262.1" y="513.9" class="ts" >D3</text>
<text x="1262.3" y="524.8" class="ts" >Orange</text>
<polyline points="879,786.5 890,786.5" fill="none" stroke="#800000" stroke-width="1" />
<polyline points="884.5,786.5 884.5,797.5" fill="none" stroke="#800000" stroke-width="1" />
<text x="866.8" y="783.9" class="tr" textLength="35.6" lengthAdjust="spacingAndGlyphs" >+5V/3V3</text>
<polyline points="884.5,797.5 884.5,829.5" fill="none" stroke="#00007c" stroke-width="1" />
<polygon points="884.5,829.5 873.5,841 895.5,841" fill="#0000ff"/>
<polyline points="873.8,831.5 873.8,829.5 895.2,829.5 895.2,827.5 893.5,827.5" fill="none" stroke="#0000cc" stroke-width="1" />
<polyline points="873.8,831.5 875.5,831.5" fill="none" stroke="#0000cc" stroke-width="1" />
<text x="896.1" y="815.2" class="ts" >D6</text>
<text x="896.1" y="826.1" class="ts" textLength="96" lengthAdjust="spacingAndGlyphs" >BAT54HT1GOSCT-ND</text>
<polyline points="884.5,840.5 884.5,904.5" fill="none" stroke="#00007c" stroke-width="1" />
<polyline points="834,904.5 938.5,904.5" fill="none" stroke="#00007c" stroke-width="1" />
<circle cx="884.5" cy="904.5" r="2.05" fill="#000078"/>
<polyline points="938.5,904.5 941.73,901.1 948.17,907.9 954.62,901.1 961.08,907.9 967.52,901.1 970.5,904.5" fill="none" stroke="#0000cc" stroke-width="1" />
<polyline points="970.5,904.5 1110.5,904.5" fill="none" stroke="#00007c" stroke-width="1" />
<circle cx="1013.5" cy="904.5" r="2.05" fill="#000078"/>
<circle cx="1110.5" cy="904.5" r="2.05" fill="#000078"/>
<text x="916.8" y="902.4" class="ts" textLength="15.6" lengthAdjust="spacingAndGlyphs" >22R</text>
<text x="981.6" y="902.4" class="ts" >R28</text>
<text x="1024.8" y="902.4" class="tr" textLength="83.4" lengthAdjust="spacingAndGlyphs" >16U2_BUF_RESETn</text>
<polyline points="1013.5,904.5 1013.5,937.5" fill="none" stroke="#00007c" stroke-width="1" />
<polyline points="1002.8,937.5 1024.2,937.5" fill="none" stroke="#0000cc" stroke-width="1" />
<polyline points="1002.8,948.5 1024.2,948.5" fill="none" stroke="#0000cc" stroke-width="1" />
<polyline points="1013.5,948.5 1013.5,956" fill="none" stroke="#00007c" stroke-width="1" />
<text x="1025.8" y="934.2" class="ts" >C33</text>
<text x="1025.8" y="944.8" class="ts" textLength="18.5" lengthAdjust="spacingAndGlyphs" >100n</text>
<polyline points="1110.5,904.5 1110.5,861.5" fill="none" stroke="#00007c" stroke-width="1" />
<polyline points="1159,733.5 1170,733.5" fill="none" stroke="#800000" stroke-width="1" />
<polyline points="1164.5,733.5 1164.5,743.5" fill="none" stroke="#800000" stroke-width="1" />
<text x="1146.8" y="730.9" class="tr" textLength="35.6" lengthAdjust="spacingAndGlyphs" >+5V/3V3</text>
<polyline points="1164.5,743.5 1164.5,765.5 1218.5,765.5 1218.5,786.5" fill="none" stroke="#00007c" stroke-width="1" />
<circle cx="1175.5" cy="765.5" r="2.05" fill="#000078"/>
<circle cx="1175.5" cy="819.5" r="2.05" fill="#000078"/>
<polyline points="1175.5,765.5 1175.5,829.5" fill="none" stroke="#00007c" stroke-width="1" />
<polyline points="1218.5,786.5 1218.5,797.5" fill="none" stroke="#000000" stroke-width="1" />
<polyline points="1207.8,797.5 1229.2,797.5" fill="none" stroke="#0000cc" stroke-width="1" />
<polyline points="1207.8,808.5 1229.2,808.5" fill="none" stroke="#0000cc" stroke-width="1" />
<polyline points="1218.5,808.5 1218.5,829.5" fill="none" stroke="#000000" stroke-width="1" />
<polyline points="1218.5,829.5 1218.5,840.5" fill="none" stroke="#800000" stroke-width="1" />
<polyline points="1207.8,840.5 1229.2,840.5" fill="none" stroke="#800000" stroke-width="1" />
<polyline points="1211,843.7 1226,843.7" fill="none" stroke="#800000" stroke-width="1" />
<polyline points="1214,846.9 1223,846.9" fill="none" stroke="#800000" stroke-width="1" />
<polyline points="1217.5,850.3 1219.5,850.3" fill="none" stroke="#800000" stroke-width="1" />
<text x="1229.8" y="794.2" class="ts" >C30</text>
<text x="1229.8" y="805" class="ts" textLength="18.5" lengthAdjust="spacingAndGlyphs" >100n</text>
<path d="M1187.5,851.5 L1164.5,851.5 L1164.5,915.5 L1187.5,915.5 A31,32 0 0 0 1187.5,851.5" fill="none" stroke="#0000cc" stroke-width="1.15"/>
<polyline points="1110.5,861.5 1164.5,861.5" fill="none" stroke="#000000" stroke-width="1" />
<rect x="1157.9" y="860" width="5.6" height="3" fill="#fefcf9" stroke="#000" stroke-width="0.9"/>
<polyline points="1157.9,859.3 1157.9,863.7" fill="none" stroke="#000" stroke-width="1.3" />
<polyline points="1110.5,904.5 1164.5,904.5" fill="none" stroke="#000000" stroke-width="1" />
<rect x="1157.9" y="903" width="5.6" height="3" fill="#fefcf9" stroke="#000" stroke-width="0.9"/>
<polyline points="1157.9,902.3 1157.9,906.7" fill="none" stroke="#000" stroke-width="1.3" />
<polyline points="1218.5,883.5 1271.5,883.5" fill="none" stroke="#000000" stroke-width="1" />
<rect x="1219.5" y="882" width="4.6" height="3" fill="#fefcf9" stroke="#000" stroke-width="0.9"/>
<polyline points="1219.2,881.1 1219.2,885.9" fill="none" stroke="#0000a0" stroke-width="1.6" />
<polyline points="1175.5,829.5 1175.5,851.5" fill="none" stroke="#000000" stroke-width="1" />
<polyline points="1175.5,915.5 1175.5,937.5" fill="none" stroke="#000000" stroke-width="1" />
<text x="1155.7" y="858.9" class="tp" text-anchor="end" >1</text>
<text x="1155.7" y="901.9" class="tp" text-anchor="end" >2</text>
<text x="1227.1" y="881.1" class="tp" >4</text>
<text class="tp" transform="translate(1173.6,840.5) rotate(-90)" text-anchor="middle">5</text>
<text class="tp" transform="translate(1173.6,925) rotate(-90)" text-anchor="middle">3</text>
<text x="1143" y="928.8" class="ts" textLength="20.5" lengthAdjust="spacingAndGlyphs" >AND</text>
<text x="1273.4" y="848" class="ts" >U7</text>
<text x="1273.4" y="858.9" class="ts" textLength="91" lengthAdjust="spacingAndGlyphs" >SN74AHC1G09DBVR</text>
<polyline points="1271.5,883.5 1331,883.5" fill="none" stroke="#000000" stroke-width="1" />
<text x="1277.4" y="880.8" class="ta" textLength="51.6" lengthAdjust="spacingAndGlyphs" >16U2_RESETn</text>
<polyline points="1175.5,937.5 1175.5,956" fill="none" stroke="#800000" stroke-width="1" />
<rect x="1465.7" y="861.8" width="74" height="52.4" fill="#ffffb0" stroke="#b04a10" stroke-width="1.2"/>
<text x="1463.8" y="859.6" class="ts" textLength="18.6" lengthAdjust="spacingAndGlyphs" >SW2</text>
<text x="1463.8" y="924.2" class="ts" textLength="34.6" lengthAdjust="spacingAndGlyphs" >FSM4JH</text>
<polyline points="1475.5,872.5 1422.5,872.5 1422.5,947.5" fill="none" stroke="#00007c" stroke-width="1" />
<polyline points="1422.5,904.5 1475.5,904.5 1475.5,872.5" fill="none" stroke="#00007c" stroke-width="1" />
<circle cx="1422.5" cy="904.5" r="2.05" fill="#000078"/>
<polyline points="1411.8,947.5 1433.2,947.5" fill="none" stroke="#800000" stroke-width="1" />
<polyline points="1415,950.7 1430,950.7" fill="none" stroke="#800000" stroke-width="1" />
<polyline points="1418,953.9 1427,953.9" fill="none" stroke="#800000" stroke-width="1" />
<circle cx="1475.5" cy="888.5" r="2.05" fill="#000078"/>
<circle cx="1529.5" cy="888.5" r="2.05" fill="#000078"/>
<polyline points="1475.5,888.5 1486.4,888.5" fill="none" stroke="#00007c" stroke-width="1" />
<polyline points="1518.2,888.5 1529.5,888.5" fill="none" stroke="#00007c" stroke-width="1" />
<circle cx="1489.6" cy="888.5" r="2.9" fill="#fffff0" stroke="#000080" stroke-width="0.9"/>
<circle cx="1515" cy="888.5" r="2.9" fill="#fffff0" stroke="#000080" stroke-width="0.9"/>
<polyline points="1490,881.9 1514.8,881.9" fill="none" stroke="#0000e0" stroke-width="3" stroke-linecap="round"/>
<polyline points="1502.5,881.9 1502.5,868.9" fill="none" stroke="#00007c" stroke-width="1" />
<polyline points="1529.5,904.5 1529.5,872.5 1862.5,872.5" fill="none" stroke="#00007c" stroke-width="1" />
<polyline points="1529.5,904.5 1572.5,904.5 1572.5,872.5" fill="none" stroke="#00007c" stroke-width="1" />
<circle cx="1572.5" cy="872.5" r="2.05" fill="#000078"/>
<circle cx="1669.5" cy="872.5" r="2.05" fill="#000078"/>
<circle cx="1744.5" cy="872.5" r="2.05" fill="#000078"/>
<circle cx="1862.5" cy="872.5" r="2.05" fill="#000078"/>
<text x="1457.4" y="869.9" class="tp" text-anchor="end" >1</text>
<text x="1457.4" y="901.9" class="tp" text-anchor="end" >2</text>
<text x="1548.4" y="869.9" class="tp" >3</text>
<text x="1548.4" y="901.9" class="tp" >4</text>
<text x="1572.6" y="870" class="tr" textLength="77.4" lengthAdjust="spacingAndGlyphs" >BUTTON_RESETn</text>
<polyline points="1664,754.5 1675,754.5" fill="none" stroke="#800000" stroke-width="1" />
<polyline points="1669.5,754.5 1669.5,765.5" fill="none" stroke="#800000" stroke-width="1" />
<text x="1651.8" y="751.9" class="tr" textLength="35.6" lengthAdjust="spacingAndGlyphs" >+5V/3V3</text>
<polyline points="1669.5,765.5 1669.5,776.5" fill="none" stroke="#000000" stroke-width="1" />
<polyline points="1669.5,776.5 1666.1,779.73 1672.9,786.17 1666.1,792.62 1672.9,799.08 1666.1,805.52 1669.5,808.75" fill="none" stroke="#0000cc" stroke-width="1" stroke-linejoin="miter"/>
<polyline points="1669.5,808.5 1669.5,872.5" fill="none" stroke="#00007c" stroke-width="1" />
<text x="1673.4" y="783.4" class="ts" >R22</text>
<text x="1674.4" y="794.2" class="ts" textLength="15.6" lengthAdjust="spacingAndGlyphs" >10K</text>
<polyline points="1739,754.5 1750,754.5" fill="none" stroke="#800000" stroke-width="1" />
<polyline points="1744.5,754.5 1744.5,765.5" fill="none" stroke="#800000" stroke-width="1" />
<text x="1726.8" y="751.9" class="tr" textLength="35.6" lengthAdjust="spacingAndGlyphs" >+5V/3V3</text>
<polyline points="1744.5,765.5 1744.5,797.5" fill="none" stroke="#00007c" stroke-width="1" />
<polygon points="1744.5,797.5 1733.5,809 1755.5,809" fill="#0000ff"/>
<polyline points="1733.8,799.5 1733.8,797.5 1755.2,797.5 1755.2,795.5 1753.5,795.5" fill="none" stroke="#0000cc" stroke-width="1" />
<polyline points="1733.8,799.5 1735.5,799.5" fill="none" stroke="#0000cc" stroke-width="1" />
<text x="1756.1" y="783.2" class="ts" >D5</text>
<text x="1756.1" y="794.1" class="ts" textLength="96" lengthAdjust="spacingAndGlyphs" >BAT54HT1GOSCT-ND</text>
<polyline points="1744.5,808.5 1744.5,872.5" fill="none" stroke="#00007c" stroke-width="1" />
<polyline points="1798.5,872.5 1801.72,869.1 1808.17,875.9 1814.62,869.1 1821.08,875.9 1827.53,869.1 1830.5,872.5" fill="none" stroke="#0000cc" stroke-width="1" />
<rect x="1799" y="868" width="31" height="9" fill="#fefcf9"/>
<polyline points="1798.5,872.5 1801.72,869.1 1808.17,875.9 1814.62,869.1 1821.08,875.9 1827.53,869.1 1830.5,872.5" fill="none" stroke="#0000cc" stroke-width="1" />
<text x="1776.8" y="870" class="ts" textLength="15.6" lengthAdjust="spacingAndGlyphs" >22R</text>
<text x="1841" y="870" class="ts" >R27</text>
<polyline points="1862.5,872.5 1862.5,956" fill="none" stroke="#00007c" stroke-width="1" />
<polyline points="1852,915.5 1866,915.5" fill="none" stroke="#0000cc" stroke-width="1" />
<polyline points="1852,926.5 1866,926.5" fill="none" stroke="#0000cc" stroke-width="1" />
<rect x="1861.5" y="916.2" width="2" height="9.6" fill="#fefcf9"/>
<rect x="1096" y="126" width="523" height="31.5" rx="4" fill="#313131"/><rect x="1292" y="129.500" width="1" height="25" fill="#1c1c1c"/><path d="M1191.9 156.500l4.600 0 0 -4.600z" fill="#bdbdbd"/><path d="M1255.9 156.500l4.600 0 0 -4.600z" fill="#bdbdbd"/><path d="M1286.9 156.500l4.600 0 0 -4.600z" fill="#bdbdbd"/><path d="M1351.9 156.500l4.600 0 0 -4.600z" fill="#bdbdbd"/><path d="M1383.4 156.500l4.600 0 0 -4.600z" fill="#bdbdbd"/><path d="M1415.4 156.500l4.600 0 0 -4.600z" fill="#bdbdbd"/><path d="M1479.9 156.500l4.600 0 0 -4.600z" fill="#bdbdbd"/><path d="M1512.4 156.500l4.600 0 0 -4.600z" fill="#bdbdbd"/><path d="M1544.9 156.500l4.600 0 0 -4.600z" fill="#bdbdbd"/><path d="M1576.9 156.500l4.600 0 0 -4.600z" fill="#bdbdbd"/><path d="M1609.4 156.500l4.600 0 0 -4.600z" fill="#bdbdbd"/><path d="M1110 134.500h13.500l-5 5.400v5.600l-3.400-2v-3.600z" fill="#6cb6d8" stroke="#a8dcf0" stroke-width=".5"/><circle cx="1122" cy="146.500" r="3" fill="#57c84a"/><rect x="1143.500" y="133.500" width="6.500" height="6" fill="#f0d050"/><path d="M1155.500 135.500l1.800 1.800-10.500 10-3.200 1.400 1.600-3.200z" fill="#e8785a" stroke="#f4b090" stroke-width=".4"/><path d="M1180.500 136v13M1174 142.500h13" stroke="#4f86d8" stroke-width="1.100"/><rect x="1238.500" y="136" width="13.500" height="13.500" fill="none" stroke="#4358a0" stroke-width="1.200" stroke-dasharray="1.600 1.400"/><path d="M1272.500 136v14" stroke="#5a5a5a" stroke-width="1.200"/><rect x="1274.500" y="138" width="6" height="3" fill="#5a5a5a"/><rect x="1274.500" y="143" width="9.500" height="3.400" fill="#5a5a5a"/><rect x="1305.500" y="135" width="8" height="15" rx="1" fill="#f2c84a" stroke="#c89a2a" stroke-width=".6"/><path d="M1302 138h3.500M1302 142.500h3.500M1302 147h3.500M1313.500 138h3.500M1313.500 142.500h3.500M1313.500 147h3.500" stroke="#d8a838" stroke-width="1.100"/><path d="M1333 139.500h6.500l4 3h6" fill="none" stroke="#4f8fd0" stroke-width="1.600"/><path d="M1336.500 144.500h6l3 2.500h4.500" fill="none" stroke="#3b70a8" stroke-width="1.500"/><path d="M1373.500 135v7.500M1365 142.500h17M1367.500 145.500h12M1370 148.500h7" stroke="#e0472e" stroke-width="1.100"/><rect x="1397.500" y="134.500" width="3.400" height="15.500" rx="1" fill="#a8d4ff" stroke="#4f8fe0" stroke-width=".6"/><path d="M1401 143.500h10" stroke="#2f5fb8" stroke-width="1.100"/><path d="M1404 141v5M1407 141v5M1410 141v5" stroke="#2f5fb8" stroke-width=".9"/><text x="1429" y="145.500" style="font:bold 8.500px 'Liberation Sans',sans-serif" fill="#4f8fe8" textLength="17">Net|</text><path d="M1429 147.500h17" stroke="#4f8fe8" stroke-width="1"/><rect x="1464.500" y="137.500" width="11.500" height="10" fill="#5ec89a" stroke="#2f8a8a" stroke-width=".8"/><path d="M1462 140h2.500M1462 145h2.500M1476 140h2.500M1476 145h2.500" stroke="#4f8fe0" stroke-width="1.200"/><path d="M1494 138.500h9.500l4.500 4-4.500 4h-9.500z" fill="#f0c030" stroke="#c09020" stroke-width=".6"/><text x="1496" y="145.300" style="font:bold 5.500px 'Liberation Sans',sans-serif" fill="#fff">D1</text><circle cx="1535" cy="142.500" r="5.600" fill="none" stroke="#d83a2a" stroke-width="1.100"/><path d="M1535 139.500v6M1526 142.500h3.500" stroke="#d83a2a" stroke-width="1.100"/><text x="1559" y="149.500" style="font:bold 18px 'Liberation Serif',serif" fill="#4f8fe8">A</text><path d="M1590.500 148a7.500 7.500 0 0 1 14.500 -1" fill="none" stroke="#55607a" stroke-width="1.300"/>
</svg>
</div></body></html>
